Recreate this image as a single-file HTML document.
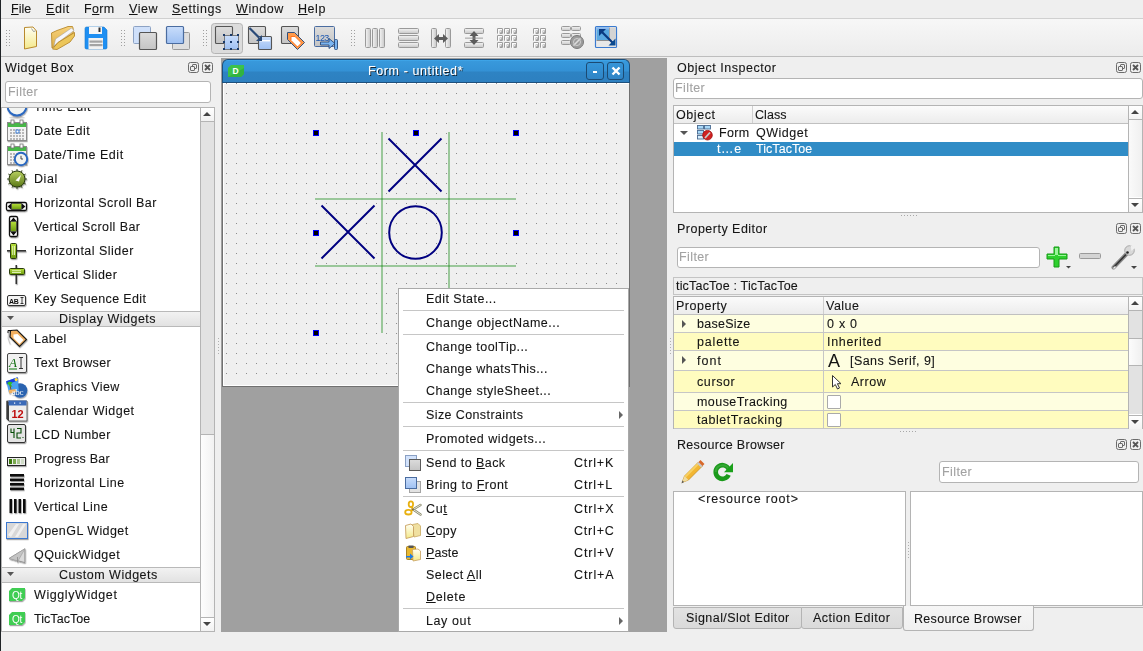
<!DOCTYPE html><html><head><meta charset="utf-8"><style>
*{box-sizing:border-box}
html,body{margin:0;padding:0}
body{width:1143px;height:651px;overflow:hidden;position:relative;background:#efefef;font-family:"Liberation Sans",sans-serif;font-size:12.5px;letter-spacing:0.4px;color:#141414;-webkit-text-stroke:0.1px currentColor}
.a{position:absolute}
.t{position:absolute;white-space:nowrap;line-height:14px;will-change:transform}
.u{text-decoration:underline;text-underline-offset:1px;text-decoration-thickness:1px}
.db{position:absolute;width:11px;height:11px;border:1px solid #6c6c6c;border-radius:2px}
.filter{position:absolute;background:#fff;border:1px solid #b4b4b4;border-radius:3px}
.ph{position:absolute;color:#a2a2a2;white-space:nowrap;line-height:14px;will-change:transform}
.frame{position:absolute;background:#fff;border:1px solid #b8b8b8}
.clip{position:absolute;overflow:hidden}
svg{position:absolute;overflow:visible}
</style></head><body>
<div class="a" style="left:0px;top:0px;width:1px;height:651px;background:#1f2326"></div>
<div class="a" style="left:1px;top:18px;width:1142px;height:1px;background:#d0d0d0"></div>
<div class="t" style="left:11px;top:2px;letter-spacing:-0.026px;"><span class="u">F</span>ile</div>
<div class="t" style="left:46px;top:2px;letter-spacing:0.562px;"><span class="u">E</span>dit</div>
<div class="t" style="left:84px;top:2px;letter-spacing:0.365px;">F<span class="u">o</span>rm</div>
<div class="t" style="left:129px;top:2px;letter-spacing:0.526px;"><span class="u">V</span>iew</div>
<div class="t" style="left:172px;top:2px;letter-spacing:0.58px;"><span class="u">S</span>ettings</div>
<div class="t" style="left:236px;top:2px;letter-spacing:0.569px;"><span class="u">W</span>indow</div>
<div class="t" style="left:298px;top:2px;letter-spacing:0.552px;"><span class="u">H</span>elp</div>
<div class="a" style="left:1px;top:19px;width:1142px;height:37px;background:linear-gradient(#f7f7f7,#ececec)"></div>
<div class="a" style="left:1px;top:56px;width:1142px;height:1px;background:#bdbdbd"></div>
<div class="a" style="left:221px;top:58px;width:446px;height:574px;background:#a0a0a0"></div>
<svg width="0" height="0" style="position:absolute"><defs>
<linearGradient id="gGrey" x1="0" y1="0" x2="0" y2="1"><stop offset="0" stop-color="#dcdcdc"/><stop offset="1" stop-color="#c4c4c4"/></linearGradient>
<linearGradient id="gBlue" x1="0" y1="0" x2="0" y2="1"><stop offset="0" stop-color="#c9ddfb"/><stop offset="1" stop-color="#9ec0f2"/></linearGradient>
<linearGradient id="gBar" x1="0" y1="0" x2="1" y2="0"><stop offset="0" stop-color="#f4f4f4"/><stop offset="1" stop-color="#c8c8c8"/></linearGradient>
<linearGradient id="gBarH" x1="0" y1="0" x2="0" y2="1"><stop offset="0" stop-color="#f4f4f4"/><stop offset="1" stop-color="#c8c8c8"/></linearGradient>
<linearGradient id="gDoc" x1="0" y1="0" x2="0" y2="1"><stop offset="0" stop-color="#fffff4"/><stop offset="1" stop-color="#f4e98a"/></linearGradient>
<linearGradient id="gFold" x1="0" y1="0" x2="0" y2="1"><stop offset="0" stop-color="#f8d27a"/><stop offset="1" stop-color="#dcae4a"/></linearGradient>
<filter id="fSh" x="-30%" y="-30%" width="160%" height="160%"><feDropShadow dx="0.6" dy="1.2" stdDeviation="0.7" flood-color="#000" flood-opacity="0.35"/></filter>
<linearGradient id="gDial" x1="0" y1="0" x2="0" y2="1"><stop offset="0" stop-color="#b8d060"/><stop offset="1" stop-color="#5a7818"/></linearGradient>
<linearGradient id="gGreen" x1="0" y1="0" x2="0" y2="1"><stop offset="0" stop-color="#b6e03a"/><stop offset="1" stop-color="#6c9a10"/></linearGradient>
</defs></svg>
<div class="a" style="left:6px;top:30px;width:1px;height:1px;background:#a0a0a0"></div>
<div class="a" style="left:9px;top:30px;width:1px;height:1px;background:#a0a0a0"></div>
<div class="a" style="left:6px;top:33px;width:1px;height:1px;background:#a0a0a0"></div>
<div class="a" style="left:9px;top:33px;width:1px;height:1px;background:#a0a0a0"></div>
<div class="a" style="left:6px;top:36px;width:1px;height:1px;background:#a0a0a0"></div>
<div class="a" style="left:9px;top:36px;width:1px;height:1px;background:#a0a0a0"></div>
<div class="a" style="left:6px;top:39px;width:1px;height:1px;background:#a0a0a0"></div>
<div class="a" style="left:9px;top:39px;width:1px;height:1px;background:#a0a0a0"></div>
<div class="a" style="left:6px;top:42px;width:1px;height:1px;background:#a0a0a0"></div>
<div class="a" style="left:9px;top:42px;width:1px;height:1px;background:#a0a0a0"></div>
<div class="a" style="left:6px;top:45px;width:1px;height:1px;background:#a0a0a0"></div>
<div class="a" style="left:9px;top:45px;width:1px;height:1px;background:#a0a0a0"></div>
<div class="a" style="left:121px;top:30px;width:1px;height:1px;background:#a0a0a0"></div>
<div class="a" style="left:124px;top:30px;width:1px;height:1px;background:#a0a0a0"></div>
<div class="a" style="left:121px;top:33px;width:1px;height:1px;background:#a0a0a0"></div>
<div class="a" style="left:124px;top:33px;width:1px;height:1px;background:#a0a0a0"></div>
<div class="a" style="left:121px;top:36px;width:1px;height:1px;background:#a0a0a0"></div>
<div class="a" style="left:124px;top:36px;width:1px;height:1px;background:#a0a0a0"></div>
<div class="a" style="left:121px;top:39px;width:1px;height:1px;background:#a0a0a0"></div>
<div class="a" style="left:124px;top:39px;width:1px;height:1px;background:#a0a0a0"></div>
<div class="a" style="left:121px;top:42px;width:1px;height:1px;background:#a0a0a0"></div>
<div class="a" style="left:124px;top:42px;width:1px;height:1px;background:#a0a0a0"></div>
<div class="a" style="left:121px;top:45px;width:1px;height:1px;background:#a0a0a0"></div>
<div class="a" style="left:124px;top:45px;width:1px;height:1px;background:#a0a0a0"></div>
<div class="a" style="left:203px;top:30px;width:1px;height:1px;background:#a0a0a0"></div>
<div class="a" style="left:206px;top:30px;width:1px;height:1px;background:#a0a0a0"></div>
<div class="a" style="left:203px;top:33px;width:1px;height:1px;background:#a0a0a0"></div>
<div class="a" style="left:206px;top:33px;width:1px;height:1px;background:#a0a0a0"></div>
<div class="a" style="left:203px;top:36px;width:1px;height:1px;background:#a0a0a0"></div>
<div class="a" style="left:206px;top:36px;width:1px;height:1px;background:#a0a0a0"></div>
<div class="a" style="left:203px;top:39px;width:1px;height:1px;background:#a0a0a0"></div>
<div class="a" style="left:206px;top:39px;width:1px;height:1px;background:#a0a0a0"></div>
<div class="a" style="left:203px;top:42px;width:1px;height:1px;background:#a0a0a0"></div>
<div class="a" style="left:206px;top:42px;width:1px;height:1px;background:#a0a0a0"></div>
<div class="a" style="left:203px;top:45px;width:1px;height:1px;background:#a0a0a0"></div>
<div class="a" style="left:206px;top:45px;width:1px;height:1px;background:#a0a0a0"></div>
<div class="a" style="left:351px;top:30px;width:1px;height:1px;background:#a0a0a0"></div>
<div class="a" style="left:354px;top:30px;width:1px;height:1px;background:#a0a0a0"></div>
<div class="a" style="left:351px;top:33px;width:1px;height:1px;background:#a0a0a0"></div>
<div class="a" style="left:354px;top:33px;width:1px;height:1px;background:#a0a0a0"></div>
<div class="a" style="left:351px;top:36px;width:1px;height:1px;background:#a0a0a0"></div>
<div class="a" style="left:354px;top:36px;width:1px;height:1px;background:#a0a0a0"></div>
<div class="a" style="left:351px;top:39px;width:1px;height:1px;background:#a0a0a0"></div>
<div class="a" style="left:354px;top:39px;width:1px;height:1px;background:#a0a0a0"></div>
<div class="a" style="left:351px;top:42px;width:1px;height:1px;background:#a0a0a0"></div>
<div class="a" style="left:354px;top:42px;width:1px;height:1px;background:#a0a0a0"></div>
<div class="a" style="left:351px;top:45px;width:1px;height:1px;background:#a0a0a0"></div>
<div class="a" style="left:354px;top:45px;width:1px;height:1px;background:#a0a0a0"></div>
<svg style="left:0;top:0" width="1143" height="60"><path d="M24.5 27.5L33 27L36.5 31V46.5L24.5 49Z" fill="url(#gDoc)" stroke="#b8892c" stroke-width="1"/><path d="M31.5 28.5L33.5 31.5L35.5 31" fill="none" stroke="#888" stroke-width="0.8"/><path d="M51.5 33L57 30.5L66 27.3L68 26.5L72.5 26.5L73.2 28.5V33L52 48Z" fill="url(#gFold)" stroke="#b8892c" stroke-width="0.9"/><path d="M54 46L55.5 39L71.5 28L74 30.5L58 42.5Z" fill="#f6f6fa" stroke="#9a9a9a" stroke-width="0.5"/><path d="M52.5 49L58 42.5L74.5 32.5V36L70 42L57 49.5Z" fill="#ecc65a" stroke="#b8892c" stroke-width="0.9"/><path d="M85 28.5Q85 27 86.5 27H104L107 30V47.5Q107 49 105.5 49H86.5Q85 49 85 47.5Z" fill="#1e8ff2" stroke="#1a78cc" stroke-width="0.6"/><rect x="89" y="27" width="13" height="7" fill="#f6f6f6"/><rect x="98.5" y="27.5" width="2" height="4.5" fill="#333"/><rect x="88.5" y="38" width="14.5" height="11" fill="#f2f2f2"/><rect x="89.5" y="40.5" width="13" height="2.2" fill="#a4a4a4"/><rect x="89.5" y="44" width="13" height="2.2" fill="#a4a4a4"/><rect x="133.5" y="26.5" width="17" height="17" rx="1" fill="#cfe0fa" stroke="#8ca2c4"/><rect x="139.5" y="32.5" width="17" height="17" rx="1" fill="url(#gGrey)" stroke="#555" stroke-width="1.2"/><rect x="172.5" y="32.5" width="17" height="17" rx="1" fill="#dedede" stroke="#9a9a9a"/><rect x="166.5" y="26.5" width="17" height="17" rx="1" fill="url(#gBlue)" stroke="#4a6ca0" stroke-width="1.2"/><rect x="211.5" y="23.5" width="31" height="30" rx="3" fill="#dcdcdc" stroke="#b4b4b4"/><rect x="215.5" y="26.5" width="17" height="17" rx="1" fill="url(#gGrey)" stroke="#555" stroke-width="1.1"/><rect x="224.5" y="35.5" width="14" height="14" fill="url(#gBlue)" stroke="#666" stroke-width="0.8"/><rect x="223" y="34" width="2" height="2" fill="#1a3a6a"/><rect x="230" y="34" width="2" height="2" fill="#1a3a6a"/><rect x="237" y="34" width="2" height="2" fill="#1a3a6a"/><rect x="223" y="41" width="2" height="2" fill="#1a3a6a"/><rect x="237" y="41" width="2" height="2" fill="#1a3a6a"/><rect x="223" y="48" width="2" height="2" fill="#1a3a6a"/><rect x="230" y="48" width="2" height="2" fill="#1a3a6a"/><rect x="237" y="48" width="2" height="2" fill="#1a3a6a"/><rect x="230" y="41" width="2" height="2" fill="#1a3a6a"/><rect x="248.5" y="26.5" width="17" height="17" rx="1" fill="url(#gGrey)" stroke="#555" stroke-width="1.1"/><rect x="258.5" y="36.5" width="13" height="13" rx="1" fill="url(#gBlue)" stroke="#555" stroke-width="1.1"/><rect x="260" y="40" width="10" height="1.4" fill="#fff"/><path d="M249.5 28L259 37.5" stroke="#2a4a78" stroke-width="2.2"/><path d="M262 35V41H256Z" fill="#2a4a78"/><rect x="281.5" y="26.5" width="17" height="17" rx="1" fill="url(#gGrey)" stroke="#555" stroke-width="1.1"/><path d="M287.5 32.5H294.5L304.5 42.5L297.5 49.5L287.5 39.5Z" fill="#ff9a4a" stroke="#34507a" stroke-width="1"/><path d="M291 36.5L295 36.5L301.5 43L297.5 47L291 40.5Z" fill="#fff" stroke="#ff6a10" stroke-width="0.9"/><rect x="314.5" y="26.5" width="20" height="20" rx="1" fill="url(#gGrey)" stroke="#4a6ca0" stroke-width="1"/><text x="315.5" y="41" font-family="Liberation Sans" font-size="9" fill="#1a56b0" letter-spacing="-0.6">123</text><path d="M320.5 42H329V38.5L335 43.5L329 48.5V45H320.5Z" fill="#7ab4f0" stroke="#2a4a78" stroke-width="0.9"/><rect x="334.5" y="39.5" width="3" height="10" rx="1" fill="#7ab4f0" stroke="#2a4a78" stroke-width="0.9"/><rect x="365.5" y="28.5" width="5" height="19" rx="1" fill="url(#gBar)" stroke="#9a9a9a"/><rect x="372.5" y="28.5" width="5" height="19" rx="1" fill="url(#gBar)" stroke="#9a9a9a"/><rect x="379.5" y="28.5" width="5" height="19" rx="1" fill="url(#gBar)" stroke="#9a9a9a"/><rect x="398.5" y="28.5" width="20" height="5" rx="1" fill="url(#gBarH)" stroke="#9a9a9a"/><rect x="398.5" y="35.5" width="20" height="5" rx="1" fill="url(#gBarH)" stroke="#9a9a9a"/><rect x="398.5" y="42.5" width="20" height="5" rx="1" fill="url(#gBarH)" stroke="#9a9a9a"/><rect x="431.5" y="28.5" width="5" height="19" rx="1" fill="url(#gBar)" stroke="#9a9a9a"/><rect x="445.5" y="28.5" width="5" height="19" rx="1" fill="url(#gBar)" stroke="#9a9a9a"/><path d="M434 38.5L439 34V37H443V34L448 38.5L443 43V40H439V43Z" fill="#5c5c5c"/><rect x="464.5" y="28.5" width="19" height="5" rx="1" fill="url(#gBarH)" stroke="#9a9a9a"/><rect x="464.5" y="42.5" width="19" height="5" rx="1" fill="url(#gBarH)" stroke="#9a9a9a"/><path d="M474 31L478.5 36H475.5V40H478.5L474 45L469.5 40H472.5V36H469.5Z" fill="#5c5c5c"/><rect x="465" y="37.7" width="18" height="0.8" fill="#888"/><rect x="497" y="28" width="6" height="6" rx="1.2" fill="#9c9c9c"/><path d="M498 29h4v1.6h-2.4v3.4h-1.6z" fill="#fcfcfc"/><rect x="500" y="31" width="1.4" height="1.4" fill="#e8e8e8"/><rect x="497" y="35" width="6" height="6" rx="1.2" fill="#9c9c9c"/><path d="M498 36h4v1.6h-2.4v3.4h-1.6z" fill="#fcfcfc"/><rect x="500" y="38" width="1.4" height="1.4" fill="#e8e8e8"/><rect x="497" y="42" width="6" height="6" rx="1.2" fill="#9c9c9c"/><path d="M498 43h4v1.6h-2.4v3.4h-1.6z" fill="#fcfcfc"/><rect x="500" y="45" width="1.4" height="1.4" fill="#e8e8e8"/><rect x="504" y="28" width="6" height="6" rx="1.2" fill="#9c9c9c"/><path d="M505 29h4v1.6h-2.4v3.4h-1.6z" fill="#fcfcfc"/><rect x="507" y="31" width="1.4" height="1.4" fill="#e8e8e8"/><rect x="504" y="35" width="6" height="6" rx="1.2" fill="#9c9c9c"/><path d="M505 36h4v1.6h-2.4v3.4h-1.6z" fill="#fcfcfc"/><rect x="507" y="38" width="1.4" height="1.4" fill="#e8e8e8"/><rect x="504" y="42" width="6" height="6" rx="1.2" fill="#9c9c9c"/><path d="M505 43h4v1.6h-2.4v3.4h-1.6z" fill="#fcfcfc"/><rect x="507" y="45" width="1.4" height="1.4" fill="#e8e8e8"/><rect x="511" y="28" width="6" height="6" rx="1.2" fill="#9c9c9c"/><path d="M512 29h4v1.6h-2.4v3.4h-1.6z" fill="#fcfcfc"/><rect x="514" y="31" width="1.4" height="1.4" fill="#e8e8e8"/><rect x="511" y="35" width="6" height="6" rx="1.2" fill="#9c9c9c"/><path d="M512 36h4v1.6h-2.4v3.4h-1.6z" fill="#fcfcfc"/><rect x="514" y="38" width="1.4" height="1.4" fill="#e8e8e8"/><rect x="511" y="42" width="6" height="6" rx="1.2" fill="#9c9c9c"/><path d="M512 43h4v1.6h-2.4v3.4h-1.6z" fill="#fcfcfc"/><rect x="514" y="45" width="1.4" height="1.4" fill="#e8e8e8"/><rect x="533" y="28" width="6" height="6" rx="1.2" fill="#9c9c9c"/><path d="M534 29h4v1.6h-2.4v3.4h-1.6z" fill="#fcfcfc"/><rect x="536" y="31" width="1.4" height="1.4" fill="#e8e8e8"/><rect x="533" y="35" width="6" height="6" rx="1.2" fill="#9c9c9c"/><path d="M534 36h4v1.6h-2.4v3.4h-1.6z" fill="#fcfcfc"/><rect x="536" y="38" width="1.4" height="1.4" fill="#e8e8e8"/><rect x="533" y="42" width="6" height="6" rx="1.2" fill="#9c9c9c"/><path d="M534 43h4v1.6h-2.4v3.4h-1.6z" fill="#fcfcfc"/><rect x="536" y="45" width="1.4" height="1.4" fill="#e8e8e8"/><rect x="540" y="28" width="6" height="6" rx="1.2" fill="#9c9c9c"/><path d="M541 29h4v1.6h-2.4v3.4h-1.6z" fill="#fcfcfc"/><rect x="543" y="31" width="1.4" height="1.4" fill="#e8e8e8"/><rect x="540" y="35" width="6" height="6" rx="1.2" fill="#9c9c9c"/><path d="M541 36h4v1.6h-2.4v3.4h-1.6z" fill="#fcfcfc"/><rect x="543" y="38" width="1.4" height="1.4" fill="#e8e8e8"/><rect x="540" y="42" width="6" height="6" rx="1.2" fill="#9c9c9c"/><path d="M541 43h4v1.6h-2.4v3.4h-1.6z" fill="#fcfcfc"/><rect x="543" y="45" width="1.4" height="1.4" fill="#e8e8e8"/><rect x="561.5" y="26.5" width="9" height="4" rx="1" fill="url(#gBarH)" stroke="#9a9a9a"/><rect x="571.5" y="26.5" width="9" height="4" rx="1" fill="url(#gBarH)" stroke="#9a9a9a"/><rect x="561.5" y="33.5" width="9" height="4" rx="1" fill="url(#gBarH)" stroke="#9a9a9a"/><rect x="571.5" y="33.5" width="9" height="4" rx="1" fill="url(#gBarH)" stroke="#9a9a9a"/><rect x="561.5" y="40.5" width="9" height="4" rx="1" fill="url(#gBarH)" stroke="#9a9a9a"/><rect x="571.5" y="40.5" width="9" height="4" rx="1" fill="url(#gBarH)" stroke="#9a9a9a"/><circle cx="577" cy="42" r="6.5" fill="#9c9c9c" stroke="#7a7a7a"/><path d="M573.5 45.5L580.5 38.5" stroke="#ddd" stroke-width="1.6"/><circle cx="577" cy="42" r="3.5" fill="none" stroke="#cfcfcf" stroke-width="1"/><rect x="595.5" y="26.5" width="21" height="21" rx="1" fill="#e6e6e6" stroke="#3a7ad0" stroke-width="1.2"/><rect x="596.5" y="27.5" width="12.5" height="12.5" fill="#5aa8e0"/><rect x="596.5" y="27.5" width="12.5" height="2" fill="#8ab8f0"/><rect x="609" y="27.5" width="7" height="19" fill="#d4d4d4"/><rect x="596.5" y="40" width="19.5" height="6.5" fill="#e8e8e8"/><rect x="596.5" y="40" width="13" height="0.8" fill="#777"/><rect x="609" y="27.5" width="0.8" height="13" fill="#999"/><path d="M601 31L613 43" stroke="#0a3a80" stroke-width="2.2"/><path d="M599 29H606L599 36Z" fill="#0a3a80"/><path d="M615.5 45.5H608.5L615.5 38.5Z" fill="#0a4a90"/></svg>
<div class="t" style="left:5px;top:61px;letter-spacing:0.497px;">Widget Box</div>
<svg style="left:188px;top:62px" width="11" height="11" viewBox="0 0 11 11"><rect x="0.5" y="0.5" width="10" height="10" rx="2" fill="none" stroke="#6c6c6c"/><rect x="4.5" y="2.5" width="4" height="4" rx="0.5" fill="none" stroke="#6c6c6c"/><rect x="2.5" y="4.5" width="4" height="4" rx="0.5" fill="#efefef" stroke="#6c6c6c"/></svg>
<svg style="left:202px;top:62px" width="11" height="11" viewBox="0 0 11 11"><rect x="0.5" y="0.5" width="10" height="10" rx="2" fill="none" stroke="#6c6c6c"/><path d="M3 3L8 8M8 3L3 8" stroke="#555" stroke-width="1.8"/></svg>
<div class="filter" style="left:5px;top:81px;width:206px;height:22px"></div>
<div class="ph" style="left:8px;top:85px">Filter</div>
<div class="a" style="left:1px;top:107px;width:214px;height:525px;background:#fff;border:1px solid #b4b4b4"></div>
<div class="clip" style="left:2px;top:108px;width:198px;height:523px">
<div class="t" style="left:32px;top:-8px;letter-spacing:0.51px">Time Edit</div>
<div class="t" style="left:32px;top:16px;letter-spacing:0.539px">Date Edit</div>
<div class="t" style="left:32px;top:40px;letter-spacing:0.534px">Date/Time Edit</div>
<div class="t" style="left:32px;top:64px;letter-spacing:0.568px">Dial</div>
<div class="t" style="left:32px;top:88px;letter-spacing:0.42px">Horizontal Scroll Bar</div>
<div class="t" style="left:32px;top:112px;letter-spacing:0.405px">Vertical Scroll Bar</div>
<div class="t" style="left:32px;top:136px;letter-spacing:0.476px">Horizontal Slider</div>
<div class="t" style="left:32px;top:160px;letter-spacing:0.465px">Vertical Slider</div>
<div class="t" style="left:32px;top:184px;letter-spacing:0.346px">Key Sequence Edit</div>
<div class="t" style="left:32px;top:224px;letter-spacing:0.449px">Label</div>
<div class="t" style="left:32px;top:248px;letter-spacing:0.411px">Text Browser</div>
<div class="t" style="left:32px;top:272px;letter-spacing:0.409px">Graphics View</div>
<div class="t" style="left:32px;top:296px;letter-spacing:0.497px">Calendar Widget</div>
<div class="t" style="left:32px;top:320px;letter-spacing:0.378px">LCD Number</div>
<div class="t" style="left:32px;top:344px;letter-spacing:0.24px">Progress Bar</div>
<div class="t" style="left:32px;top:368px;letter-spacing:0.48px">Horizontal Line</div>
<div class="t" style="left:32px;top:392px;letter-spacing:0.469px">Vertical Line</div>
<div class="t" style="left:32px;top:416px;letter-spacing:0.415px">OpenGL Widget</div>
<div class="t" style="left:32px;top:440px;letter-spacing:0.462px">QQuickWidget</div>
<div class="t" style="left:32px;top:480px;letter-spacing:0.587px">WigglyWidget</div>
<div class="t" style="left:32px;top:504px;letter-spacing:0.049px">TicTacToe</div>
<div class="a" style="left:0px;top:203px;width:198px;height:16px;background:linear-gradient(#f2f2f2,#e2e2e2);border-top:1px solid #b9b9b9;border-bottom:1px solid #b9b9b9"></div>
<div class="t" style="left:57px;top:204px;letter-spacing:0.496px">Display Widgets</div>
<svg style="left:5px;top:208px" width="8" height="5"><path d="M0 0H7L3.5 4Z" fill="#555"/></svg>
<div class="a" style="left:0px;top:459px;width:198px;height:16px;background:linear-gradient(#f2f2f2,#e2e2e2);border-top:1px solid #b9b9b9;border-bottom:1px solid #b9b9b9"></div>
<div class="t" style="left:57px;top:460px;letter-spacing:0.508px">Custom Widgets</div>
<svg style="left:5px;top:464px" width="8" height="5"><path d="M0 0H7L3.5 4Z" fill="#555"/></svg>
<svg style="left:0;top:0" width="198" height="523"><g transform="translate(-2,-108)" filter="url(#fSh)"><ellipse cx="17" cy="117.5" rx="8" ry="1.2" fill="#000" opacity="0.15"/><circle cx="17" cy="106" r="9.5" fill="#f2f4f2" stroke="#2a68c0" stroke-width="2"/><path d="M17 99.5V106H19" stroke="#333" stroke-width="0.9" fill="none"/><rect x="7.5" y="122.5" width="19" height="18" fill="#f4f4f4" stroke="#8a8a8a"/><rect x="8" y="123" width="18" height="4" fill="#47b847"/><rect x="11" y="120" width="3" height="4" fill="#fff" stroke="#777" stroke-width="0.8"/><rect x="20" y="120" width="3" height="4" fill="#fff" stroke="#777" stroke-width="0.8"/><rect x="10" y="129" width="2" height="2" fill="#b8b8b8"/><rect x="13" y="129" width="2" height="2" fill="#b8b8b8"/><rect x="16" y="129" width="2" height="2" fill="#b8b8b8"/><rect x="19" y="129" width="2" height="2" fill="#b8b8b8"/><rect x="22" y="129" width="2" height="2" fill="#b8b8b8"/><rect x="10" y="132" width="2" height="2" fill="#b8b8b8"/><rect x="13" y="132" width="2" height="2" fill="#b8b8b8"/><rect x="16" y="132" width="2" height="2" fill="#b8b8b8"/><rect x="19" y="132" width="2" height="2" fill="#b8b8b8"/><rect x="22" y="132" width="2" height="2" fill="#b8b8b8"/><rect x="10" y="135" width="2" height="2" fill="#b8b8b8"/><rect x="13" y="135" width="2" height="2" fill="#b8b8b8"/><rect x="16" y="135" width="2" height="2" fill="#b8b8b8"/><rect x="19" y="135" width="2" height="2" fill="#b8b8b8"/><rect x="22" y="135" width="2" height="2" fill="#b8b8b8"/><rect x="10" y="138" width="2" height="2" fill="#b8b8b8"/><rect x="13" y="138" width="2" height="2" fill="#b8b8b8"/><rect x="16" y="138" width="2" height="2" fill="#b8b8b8"/><rect x="19" y="138" width="2" height="2" fill="#b8b8b8"/><rect x="22" y="138" width="2" height="2" fill="#b8b8b8"/><rect x="16" y="130" width="3" height="3" fill="#fff" stroke="#3a7ad0" stroke-width="1"/><rect x="7.5" y="146.5" width="19" height="18" fill="#f4f4f4" stroke="#8a8a8a"/><rect x="8" y="147" width="18" height="4" fill="#47b847"/><rect x="11" y="144" width="3" height="4" fill="#fff" stroke="#777" stroke-width="0.8"/><rect x="20" y="144" width="3" height="4" fill="#fff" stroke="#777" stroke-width="0.8"/><rect x="10" y="153" width="2" height="2" fill="#b8b8b8"/><rect x="13" y="153" width="2" height="2" fill="#b8b8b8"/><rect x="16" y="153" width="2" height="2" fill="#b8b8b8"/><rect x="19" y="153" width="2" height="2" fill="#b8b8b8"/><rect x="22" y="153" width="2" height="2" fill="#b8b8b8"/><rect x="10" y="156" width="2" height="2" fill="#b8b8b8"/><rect x="13" y="156" width="2" height="2" fill="#b8b8b8"/><rect x="16" y="156" width="2" height="2" fill="#b8b8b8"/><rect x="19" y="156" width="2" height="2" fill="#b8b8b8"/><rect x="22" y="156" width="2" height="2" fill="#b8b8b8"/><rect x="10" y="159" width="2" height="2" fill="#b8b8b8"/><rect x="13" y="159" width="2" height="2" fill="#b8b8b8"/><rect x="16" y="159" width="2" height="2" fill="#b8b8b8"/><rect x="19" y="159" width="2" height="2" fill="#b8b8b8"/><rect x="22" y="159" width="2" height="2" fill="#b8b8b8"/><rect x="10" y="162" width="2" height="2" fill="#b8b8b8"/><rect x="13" y="162" width="2" height="2" fill="#b8b8b8"/><rect x="16" y="162" width="2" height="2" fill="#b8b8b8"/><rect x="19" y="162" width="2" height="2" fill="#b8b8b8"/><rect x="22" y="162" width="2" height="2" fill="#b8b8b8"/><circle cx="21" cy="159" r="6.2" fill="#f2f4f2" stroke="#2a68c0" stroke-width="2"/><path d="M21 155.8V159H23" stroke="#333" stroke-width="0.9" fill="none"/><path d="M25.0 179.0L27.0 179.0" stroke="#3a4a20" stroke-width="1"/><path d="M23.9 183.0L25.7 184.0" stroke="#3a4a20" stroke-width="1"/><path d="M21.0 185.9L22.0 187.7" stroke="#3a4a20" stroke-width="1"/><path d="M17.0 187.0L17.0 189.0" stroke="#3a4a20" stroke-width="1"/><path d="M13.0 185.9L12.0 187.7" stroke="#3a4a20" stroke-width="1"/><path d="M10.1 183.0L8.3 184.0" stroke="#3a4a20" stroke-width="1"/><path d="M9.0 179.0L7.0 179.0" stroke="#3a4a20" stroke-width="1"/><path d="M10.1 175.0L8.3 174.0" stroke="#3a4a20" stroke-width="1"/><path d="M13.0 172.1L12.0 170.3" stroke="#3a4a20" stroke-width="1"/><path d="M17.0 171.0L17.0 169.0" stroke="#3a4a20" stroke-width="1"/><path d="M21.0 172.1L22.0 170.3" stroke="#3a4a20" stroke-width="1"/><path d="M23.9 175.0L25.7 174.0" stroke="#3a4a20" stroke-width="1"/><circle cx="17" cy="179" r="8" fill="url(#gDial)" stroke="#2a3a10" stroke-width="1"/><path d="M15.5 180.5L21 175L19 181.5Z" fill="#fff"/><path d="M15.5 180.5L21 175L17.5 179Z" fill="#dfe8c8"/><rect x="6.5" y="202.5" width="20" height="8" rx="1.5" fill="#fff" stroke="#111" stroke-width="1.3"/><rect x="11.5" y="203.5" width="10" height="6" fill="url(#gGreen)" stroke="#222" stroke-width="0.7"/><path d="M7.6 206.5L11 203.6V209.4Z M25.4 206.5L22 203.6V209.4Z" fill="#111"/><rect x="9.5" y="216.5" width="8" height="20" rx="1.5" fill="#fff" stroke="#111" stroke-width="1.3"/><rect x="10.5" y="221.5" width="6" height="10" fill="url(#gGreen)" stroke="#222" stroke-width="0.7"/><path d="M13.5 217.6L10.6 221H16.4Z M13.5 235.4L10.6 232H16.4Z" fill="#111"/><rect x="7" y="250" width="19" height="1.6" fill="#333"/><rect x="10.5" y="243.5" width="6" height="15" rx="1" fill="url(#gGreen)" stroke="#2a3a10"/><rect x="12.3" y="246" width="0.9" height="9" fill="#e8f8c0"/><rect x="14" y="246" width="0.9" height="9" fill="#e8f8c0"/><rect x="15.5" y="265" width="1.6" height="19" fill="#333"/><rect x="9.5" y="268.5" width="15" height="6" rx="1" fill="url(#gGreen)" stroke="#2a3a10"/><rect x="12" y="270.3" width="9" height="0.9" fill="#e8f8c0"/><rect x="12" y="272" width="9" height="0.9" fill="#e8f8c0"/><rect x="7.5" y="295.5" width="18" height="10" rx="1.5" fill="#f4f4f4" stroke="#333"/><text x="9" y="303.5" font-family="Liberation Sans" font-weight="bold" font-size="7" fill="#111" letter-spacing="-0.4">AB</text><path d="M20.5 297.5H23.5M22 297.5V303.5M20.5 303.5H23.5" stroke="#111" stroke-width="0.8"/><path d="M10.5 330.5L17 330L26.5 339.5L19.5 346.5L10 337Z" fill="#f2b060" stroke="#1a1a1a" stroke-width="1.2"/><path d="M13.5 334.5L17.5 334L23.5 340L19.5 344L13.5 338Z" fill="#fff"/><path d="M8 333V330.5H12" fill="none" stroke="#111" stroke-width="1"/><path d="M8.5 333Q7 338 10 344" fill="none" stroke="#aaa" stroke-width="0.6"/><rect x="7.5" y="353.5" width="19" height="19" rx="1.5" fill="#f0f0f0" stroke="#444"/><text x="9" y="367" font-family="Liberation Serif" font-style="italic" font-size="13" fill="#0a6a0a">A</text><rect x="9" y="368.5" width="8" height="1" fill="#0a7a0a"/><path d="M19 357.5H23M21 357.5V368.5M19 368.5H23" stroke="#222" stroke-width="0.9"/><circle cx="20" cy="390.5" r="7.3" fill="#2a64b0"/><path d="M6.2 381.2L17.6 377.2L18.8 390.8L9.2 393.6Z" fill="#4aa0f0"/><path d="M6.2 381.2L17.6 377.2L17.9 380.5L6.8 384.5Z" fill="#1a40e0"/><path d="M7 383L9.5 381.5L12.5 382.5L11 384.5L12.5 387L10 386Z" fill="#30c020"/><path d="M10 385.5L11.5 392" stroke="#7a5020" stroke-width="1"/><path d="M8.6 390L15.5 389L16 392L9.2 393.6Z" fill="#f0b060"/><circle cx="16.2" cy="379.6" r="1.6" fill="#ffe040"/><text x="11.5" y="394.5" font-family="Liberation Serif" font-size="9" fill="#fff" letter-spacing="-0.2">abc</text><path d="M7 401H27V421H9L7 419Z" fill="#eeeeee" stroke="#555" stroke-width="0.9"/><path d="M6.5 400.5L9 402V421L6.5 419Z" fill="#3a3a3a"/><rect x="8.5" y="400.5" width="18" height="5" fill="#3a6ab8"/><rect x="14" y="402.5" width="1.2" height="1.2" fill="#fff"/><rect x="19.5" y="402.5" width="1.2" height="1.2" fill="#fff"/><text x="17.5" y="417.5" font-family="Liberation Sans" font-weight="bold" font-size="11" fill="#c01010" text-anchor="middle" letter-spacing="-0.2">12</text><rect x="7.5" y="424.5" width="18" height="18" rx="1.5" fill="#e4e4e4" stroke="#333"/><path d="M11 428.5V432.5H14M14 428.5V438M17 428.5H21V433H17V438H21M22.5 437.5h1" fill="none" stroke="#044a04" stroke-width="1.1"/><rect x="7.5" y="457.5" width="18" height="8" fill="#eee" stroke="#222"/><rect x="9" y="459" width="3" height="5" fill="#3a7a10"/><rect x="13" y="459" width="3" height="5" fill="#7aaa50"/><rect x="17" y="459" width="3" height="5" fill="#aac890"/><rect x="21" y="459" width="3" height="5" fill="#d0dcc8"/><rect x="10" y="474" width="14" height="2.6" fill="#111"/><rect x="10" y="478.5" width="14" height="2.6" fill="#111"/><rect x="10" y="483" width="14" height="2.6" fill="#111"/><rect x="10" y="487.5" width="14" height="2.6" fill="#111"/><rect x="9.5" y="499" width="2.6" height="14" fill="#111"/><rect x="14" y="499" width="2.6" height="14" fill="#111"/><rect x="18.5" y="499" width="2.6" height="14" fill="#111"/><rect x="23" y="499" width="2.6" height="14" fill="#111"/><rect x="6.5" y="522.5" width="21" height="16" fill="#d8d8d8" stroke="#3a78d0"/><path d="M8 535L16 524H19L11 537Z M15 537L23 524H26L18 537Z" fill="#f0f0f0"/><path d="M9.2 558.4L24.9 548.8L24.9 562.6Z" fill="#dadada" stroke="#8c8c8c" stroke-width="0.9" stroke-linejoin="round"/><path d="M9.2 558.4L24.9 548.8L18 561Z" fill="#c4c4c4" stroke="#9a9a9a" stroke-width="0.6"/><path d="M17.5 557L17.5 562.5" stroke="#8c8c8c" stroke-width="0.8"/><path d="M12 588H25V598L22 601H9V591Z" fill="#41cd52"/><text x="17" y="598.5" font-family="Liberation Sans" font-size="10" fill="#fff" text-anchor="middle" letter-spacing="-0.3">Qt</text><path d="M12 612H25V622L22 625H9V615Z" fill="#41cd52"/><text x="17" y="622.5" font-family="Liberation Sans" font-size="10" fill="#fff" text-anchor="middle" letter-spacing="-0.3">Qt</text></g></svg>
</div>
<div class="a" style="left:200px;top:108px;width:1px;height:523px;background:#b4b4b4"></div>
<div class="a" style="left:201px;top:108px;width:13px;height:13px;background:linear-gradient(#fff,#f2f2f2)"></div>
<div class="a" style="left:201px;top:121px;width:13px;height:1px;background:#b4b4b4"></div>
<div class="a" style="left:201px;top:122px;width:13px;height:313px;background:#e2e2e2"></div>
<div class="a" style="left:201px;top:434px;width:13px;height:1px;background:#b4b4b4"></div>
<div class="a" style="left:201px;top:435px;width:13px;height:182px;background:linear-gradient(90deg,#fdfdfd,#f2f2f2)"></div>
<div class="a" style="left:201px;top:617px;width:13px;height:1px;background:#b4b4b4"></div>
<div class="a" style="left:201px;top:618px;width:13px;height:13px;background:linear-gradient(#fff,#f2f2f2)"></div>
<svg style="left:203px;top:112px" width="9" height="5"><path d="M0 4H8L4 0Z" fill="#444"/></svg>
<svg style="left:203px;top:622px" width="9" height="5"><path d="M0 0H8L4 4Z" fill="#444"/></svg>
<div class="a" style="left:218px;top:338px;width:1px;height:1px;background:#b0b0b0"></div>
<div class="a" style="left:670px;top:338px;width:1px;height:1px;background:#b0b0b0"></div>
<div class="a" style="left:218px;top:341px;width:1px;height:1px;background:#b0b0b0"></div>
<div class="a" style="left:670px;top:341px;width:1px;height:1px;background:#b0b0b0"></div>
<div class="a" style="left:218px;top:344px;width:1px;height:1px;background:#b0b0b0"></div>
<div class="a" style="left:670px;top:344px;width:1px;height:1px;background:#b0b0b0"></div>
<div class="a" style="left:218px;top:347px;width:1px;height:1px;background:#b0b0b0"></div>
<div class="a" style="left:670px;top:347px;width:1px;height:1px;background:#b0b0b0"></div>
<div class="a" style="left:218px;top:350px;width:1px;height:1px;background:#b0b0b0"></div>
<div class="a" style="left:670px;top:350px;width:1px;height:1px;background:#b0b0b0"></div>
<div class="a" style="left:218px;top:353px;width:1px;height:1px;background:#b0b0b0"></div>
<div class="a" style="left:670px;top:353px;width:1px;height:1px;background:#b0b0b0"></div>
<div class="a" style="left:222px;top:83px;width:408px;height:304px;background:#707070"></div>
<div class="a" style="left:223px;top:83px;width:406px;height:303px;background:#fff"></div>
<div class="a" style="left:224px;top:84px;width:405px;height:301px;background:#efefef"></div>
<svg style="left:0;top:0" width="1143" height="651"><path fill="#8c8c8c" d="M226 83h1v1h-1zM236 83h1v1h-1zM246 83h1v1h-1zM256 83h1v1h-1zM266 83h1v1h-1zM276 83h1v1h-1zM286 83h1v1h-1zM296 83h1v1h-1zM306 83h1v1h-1zM316 83h1v1h-1zM326 83h1v1h-1zM336 83h1v1h-1zM346 83h1v1h-1zM356 83h1v1h-1zM366 83h1v1h-1zM376 83h1v1h-1zM386 83h1v1h-1zM396 83h1v1h-1zM406 83h1v1h-1zM416 83h1v1h-1zM426 83h1v1h-1zM436 83h1v1h-1zM446 83h1v1h-1zM456 83h1v1h-1zM466 83h1v1h-1zM476 83h1v1h-1zM486 83h1v1h-1zM496 83h1v1h-1zM506 83h1v1h-1zM516 83h1v1h-1zM526 83h1v1h-1zM536 83h1v1h-1zM546 83h1v1h-1zM556 83h1v1h-1zM566 83h1v1h-1zM576 83h1v1h-1zM586 83h1v1h-1zM596 83h1v1h-1zM606 83h1v1h-1zM616 83h1v1h-1zM226 93h1v1h-1zM236 93h1v1h-1zM246 93h1v1h-1zM256 93h1v1h-1zM266 93h1v1h-1zM276 93h1v1h-1zM286 93h1v1h-1zM296 93h1v1h-1zM306 93h1v1h-1zM316 93h1v1h-1zM326 93h1v1h-1zM336 93h1v1h-1zM346 93h1v1h-1zM356 93h1v1h-1zM366 93h1v1h-1zM376 93h1v1h-1zM386 93h1v1h-1zM396 93h1v1h-1zM406 93h1v1h-1zM416 93h1v1h-1zM426 93h1v1h-1zM436 93h1v1h-1zM446 93h1v1h-1zM456 93h1v1h-1zM466 93h1v1h-1zM476 93h1v1h-1zM486 93h1v1h-1zM496 93h1v1h-1zM506 93h1v1h-1zM516 93h1v1h-1zM526 93h1v1h-1zM536 93h1v1h-1zM546 93h1v1h-1zM556 93h1v1h-1zM566 93h1v1h-1zM576 93h1v1h-1zM586 93h1v1h-1zM596 93h1v1h-1zM606 93h1v1h-1zM616 93h1v1h-1zM226 103h1v1h-1zM236 103h1v1h-1zM246 103h1v1h-1zM256 103h1v1h-1zM266 103h1v1h-1zM276 103h1v1h-1zM286 103h1v1h-1zM296 103h1v1h-1zM306 103h1v1h-1zM316 103h1v1h-1zM326 103h1v1h-1zM336 103h1v1h-1zM346 103h1v1h-1zM356 103h1v1h-1zM366 103h1v1h-1zM376 103h1v1h-1zM386 103h1v1h-1zM396 103h1v1h-1zM406 103h1v1h-1zM416 103h1v1h-1zM426 103h1v1h-1zM436 103h1v1h-1zM446 103h1v1h-1zM456 103h1v1h-1zM466 103h1v1h-1zM476 103h1v1h-1zM486 103h1v1h-1zM496 103h1v1h-1zM506 103h1v1h-1zM516 103h1v1h-1zM526 103h1v1h-1zM536 103h1v1h-1zM546 103h1v1h-1zM556 103h1v1h-1zM566 103h1v1h-1zM576 103h1v1h-1zM586 103h1v1h-1zM596 103h1v1h-1zM606 103h1v1h-1zM616 103h1v1h-1zM226 113h1v1h-1zM236 113h1v1h-1zM246 113h1v1h-1zM256 113h1v1h-1zM266 113h1v1h-1zM276 113h1v1h-1zM286 113h1v1h-1zM296 113h1v1h-1zM306 113h1v1h-1zM316 113h1v1h-1zM326 113h1v1h-1zM336 113h1v1h-1zM346 113h1v1h-1zM356 113h1v1h-1zM366 113h1v1h-1zM376 113h1v1h-1zM386 113h1v1h-1zM396 113h1v1h-1zM406 113h1v1h-1zM416 113h1v1h-1zM426 113h1v1h-1zM436 113h1v1h-1zM446 113h1v1h-1zM456 113h1v1h-1zM466 113h1v1h-1zM476 113h1v1h-1zM486 113h1v1h-1zM496 113h1v1h-1zM506 113h1v1h-1zM516 113h1v1h-1zM526 113h1v1h-1zM536 113h1v1h-1zM546 113h1v1h-1zM556 113h1v1h-1zM566 113h1v1h-1zM576 113h1v1h-1zM586 113h1v1h-1zM596 113h1v1h-1zM606 113h1v1h-1zM616 113h1v1h-1zM226 123h1v1h-1zM236 123h1v1h-1zM246 123h1v1h-1zM256 123h1v1h-1zM266 123h1v1h-1zM276 123h1v1h-1zM286 123h1v1h-1zM296 123h1v1h-1zM306 123h1v1h-1zM316 123h1v1h-1zM326 123h1v1h-1zM336 123h1v1h-1zM346 123h1v1h-1zM356 123h1v1h-1zM366 123h1v1h-1zM376 123h1v1h-1zM386 123h1v1h-1zM396 123h1v1h-1zM406 123h1v1h-1zM416 123h1v1h-1zM426 123h1v1h-1zM436 123h1v1h-1zM446 123h1v1h-1zM456 123h1v1h-1zM466 123h1v1h-1zM476 123h1v1h-1zM486 123h1v1h-1zM496 123h1v1h-1zM506 123h1v1h-1zM516 123h1v1h-1zM526 123h1v1h-1zM536 123h1v1h-1zM546 123h1v1h-1zM556 123h1v1h-1zM566 123h1v1h-1zM576 123h1v1h-1zM586 123h1v1h-1zM596 123h1v1h-1zM606 123h1v1h-1zM616 123h1v1h-1zM226 133h1v1h-1zM236 133h1v1h-1zM246 133h1v1h-1zM256 133h1v1h-1zM266 133h1v1h-1zM276 133h1v1h-1zM286 133h1v1h-1zM296 133h1v1h-1zM306 133h1v1h-1zM316 133h1v1h-1zM326 133h1v1h-1zM336 133h1v1h-1zM346 133h1v1h-1zM356 133h1v1h-1zM366 133h1v1h-1zM376 133h1v1h-1zM386 133h1v1h-1zM396 133h1v1h-1zM406 133h1v1h-1zM416 133h1v1h-1zM426 133h1v1h-1zM436 133h1v1h-1zM446 133h1v1h-1zM456 133h1v1h-1zM466 133h1v1h-1zM476 133h1v1h-1zM486 133h1v1h-1zM496 133h1v1h-1zM506 133h1v1h-1zM516 133h1v1h-1zM526 133h1v1h-1zM536 133h1v1h-1zM546 133h1v1h-1zM556 133h1v1h-1zM566 133h1v1h-1zM576 133h1v1h-1zM586 133h1v1h-1zM596 133h1v1h-1zM606 133h1v1h-1zM616 133h1v1h-1zM226 143h1v1h-1zM236 143h1v1h-1zM246 143h1v1h-1zM256 143h1v1h-1zM266 143h1v1h-1zM276 143h1v1h-1zM286 143h1v1h-1zM296 143h1v1h-1zM306 143h1v1h-1zM316 143h1v1h-1zM326 143h1v1h-1zM336 143h1v1h-1zM346 143h1v1h-1zM356 143h1v1h-1zM366 143h1v1h-1zM376 143h1v1h-1zM386 143h1v1h-1zM396 143h1v1h-1zM406 143h1v1h-1zM416 143h1v1h-1zM426 143h1v1h-1zM436 143h1v1h-1zM446 143h1v1h-1zM456 143h1v1h-1zM466 143h1v1h-1zM476 143h1v1h-1zM486 143h1v1h-1zM496 143h1v1h-1zM506 143h1v1h-1zM516 143h1v1h-1zM526 143h1v1h-1zM536 143h1v1h-1zM546 143h1v1h-1zM556 143h1v1h-1zM566 143h1v1h-1zM576 143h1v1h-1zM586 143h1v1h-1zM596 143h1v1h-1zM606 143h1v1h-1zM616 143h1v1h-1zM226 153h1v1h-1zM236 153h1v1h-1zM246 153h1v1h-1zM256 153h1v1h-1zM266 153h1v1h-1zM276 153h1v1h-1zM286 153h1v1h-1zM296 153h1v1h-1zM306 153h1v1h-1zM316 153h1v1h-1zM326 153h1v1h-1zM336 153h1v1h-1zM346 153h1v1h-1zM356 153h1v1h-1zM366 153h1v1h-1zM376 153h1v1h-1zM386 153h1v1h-1zM396 153h1v1h-1zM406 153h1v1h-1zM416 153h1v1h-1zM426 153h1v1h-1zM436 153h1v1h-1zM446 153h1v1h-1zM456 153h1v1h-1zM466 153h1v1h-1zM476 153h1v1h-1zM486 153h1v1h-1zM496 153h1v1h-1zM506 153h1v1h-1zM516 153h1v1h-1zM526 153h1v1h-1zM536 153h1v1h-1zM546 153h1v1h-1zM556 153h1v1h-1zM566 153h1v1h-1zM576 153h1v1h-1zM586 153h1v1h-1zM596 153h1v1h-1zM606 153h1v1h-1zM616 153h1v1h-1zM226 163h1v1h-1zM236 163h1v1h-1zM246 163h1v1h-1zM256 163h1v1h-1zM266 163h1v1h-1zM276 163h1v1h-1zM286 163h1v1h-1zM296 163h1v1h-1zM306 163h1v1h-1zM316 163h1v1h-1zM326 163h1v1h-1zM336 163h1v1h-1zM346 163h1v1h-1zM356 163h1v1h-1zM366 163h1v1h-1zM376 163h1v1h-1zM386 163h1v1h-1zM396 163h1v1h-1zM406 163h1v1h-1zM416 163h1v1h-1zM426 163h1v1h-1zM436 163h1v1h-1zM446 163h1v1h-1zM456 163h1v1h-1zM466 163h1v1h-1zM476 163h1v1h-1zM486 163h1v1h-1zM496 163h1v1h-1zM506 163h1v1h-1zM516 163h1v1h-1zM526 163h1v1h-1zM536 163h1v1h-1zM546 163h1v1h-1zM556 163h1v1h-1zM566 163h1v1h-1zM576 163h1v1h-1zM586 163h1v1h-1zM596 163h1v1h-1zM606 163h1v1h-1zM616 163h1v1h-1zM226 173h1v1h-1zM236 173h1v1h-1zM246 173h1v1h-1zM256 173h1v1h-1zM266 173h1v1h-1zM276 173h1v1h-1zM286 173h1v1h-1zM296 173h1v1h-1zM306 173h1v1h-1zM316 173h1v1h-1zM326 173h1v1h-1zM336 173h1v1h-1zM346 173h1v1h-1zM356 173h1v1h-1zM366 173h1v1h-1zM376 173h1v1h-1zM386 173h1v1h-1zM396 173h1v1h-1zM406 173h1v1h-1zM416 173h1v1h-1zM426 173h1v1h-1zM436 173h1v1h-1zM446 173h1v1h-1zM456 173h1v1h-1zM466 173h1v1h-1zM476 173h1v1h-1zM486 173h1v1h-1zM496 173h1v1h-1zM506 173h1v1h-1zM516 173h1v1h-1zM526 173h1v1h-1zM536 173h1v1h-1zM546 173h1v1h-1zM556 173h1v1h-1zM566 173h1v1h-1zM576 173h1v1h-1zM586 173h1v1h-1zM596 173h1v1h-1zM606 173h1v1h-1zM616 173h1v1h-1zM226 183h1v1h-1zM236 183h1v1h-1zM246 183h1v1h-1zM256 183h1v1h-1zM266 183h1v1h-1zM276 183h1v1h-1zM286 183h1v1h-1zM296 183h1v1h-1zM306 183h1v1h-1zM316 183h1v1h-1zM326 183h1v1h-1zM336 183h1v1h-1zM346 183h1v1h-1zM356 183h1v1h-1zM366 183h1v1h-1zM376 183h1v1h-1zM386 183h1v1h-1zM396 183h1v1h-1zM406 183h1v1h-1zM416 183h1v1h-1zM426 183h1v1h-1zM436 183h1v1h-1zM446 183h1v1h-1zM456 183h1v1h-1zM466 183h1v1h-1zM476 183h1v1h-1zM486 183h1v1h-1zM496 183h1v1h-1zM506 183h1v1h-1zM516 183h1v1h-1zM526 183h1v1h-1zM536 183h1v1h-1zM546 183h1v1h-1zM556 183h1v1h-1zM566 183h1v1h-1zM576 183h1v1h-1zM586 183h1v1h-1zM596 183h1v1h-1zM606 183h1v1h-1zM616 183h1v1h-1zM226 193h1v1h-1zM236 193h1v1h-1zM246 193h1v1h-1zM256 193h1v1h-1zM266 193h1v1h-1zM276 193h1v1h-1zM286 193h1v1h-1zM296 193h1v1h-1zM306 193h1v1h-1zM316 193h1v1h-1zM326 193h1v1h-1zM336 193h1v1h-1zM346 193h1v1h-1zM356 193h1v1h-1zM366 193h1v1h-1zM376 193h1v1h-1zM386 193h1v1h-1zM396 193h1v1h-1zM406 193h1v1h-1zM416 193h1v1h-1zM426 193h1v1h-1zM436 193h1v1h-1zM446 193h1v1h-1zM456 193h1v1h-1zM466 193h1v1h-1zM476 193h1v1h-1zM486 193h1v1h-1zM496 193h1v1h-1zM506 193h1v1h-1zM516 193h1v1h-1zM526 193h1v1h-1zM536 193h1v1h-1zM546 193h1v1h-1zM556 193h1v1h-1zM566 193h1v1h-1zM576 193h1v1h-1zM586 193h1v1h-1zM596 193h1v1h-1zM606 193h1v1h-1zM616 193h1v1h-1zM226 203h1v1h-1zM236 203h1v1h-1zM246 203h1v1h-1zM256 203h1v1h-1zM266 203h1v1h-1zM276 203h1v1h-1zM286 203h1v1h-1zM296 203h1v1h-1zM306 203h1v1h-1zM316 203h1v1h-1zM326 203h1v1h-1zM336 203h1v1h-1zM346 203h1v1h-1zM356 203h1v1h-1zM366 203h1v1h-1zM376 203h1v1h-1zM386 203h1v1h-1zM396 203h1v1h-1zM406 203h1v1h-1zM416 203h1v1h-1zM426 203h1v1h-1zM436 203h1v1h-1zM446 203h1v1h-1zM456 203h1v1h-1zM466 203h1v1h-1zM476 203h1v1h-1zM486 203h1v1h-1zM496 203h1v1h-1zM506 203h1v1h-1zM516 203h1v1h-1zM526 203h1v1h-1zM536 203h1v1h-1zM546 203h1v1h-1zM556 203h1v1h-1zM566 203h1v1h-1zM576 203h1v1h-1zM586 203h1v1h-1zM596 203h1v1h-1zM606 203h1v1h-1zM616 203h1v1h-1zM226 213h1v1h-1zM236 213h1v1h-1zM246 213h1v1h-1zM256 213h1v1h-1zM266 213h1v1h-1zM276 213h1v1h-1zM286 213h1v1h-1zM296 213h1v1h-1zM306 213h1v1h-1zM316 213h1v1h-1zM326 213h1v1h-1zM336 213h1v1h-1zM346 213h1v1h-1zM356 213h1v1h-1zM366 213h1v1h-1zM376 213h1v1h-1zM386 213h1v1h-1zM396 213h1v1h-1zM406 213h1v1h-1zM416 213h1v1h-1zM426 213h1v1h-1zM436 213h1v1h-1zM446 213h1v1h-1zM456 213h1v1h-1zM466 213h1v1h-1zM476 213h1v1h-1zM486 213h1v1h-1zM496 213h1v1h-1zM506 213h1v1h-1zM516 213h1v1h-1zM526 213h1v1h-1zM536 213h1v1h-1zM546 213h1v1h-1zM556 213h1v1h-1zM566 213h1v1h-1zM576 213h1v1h-1zM586 213h1v1h-1zM596 213h1v1h-1zM606 213h1v1h-1zM616 213h1v1h-1zM226 223h1v1h-1zM236 223h1v1h-1zM246 223h1v1h-1zM256 223h1v1h-1zM266 223h1v1h-1zM276 223h1v1h-1zM286 223h1v1h-1zM296 223h1v1h-1zM306 223h1v1h-1zM316 223h1v1h-1zM326 223h1v1h-1zM336 223h1v1h-1zM346 223h1v1h-1zM356 223h1v1h-1zM366 223h1v1h-1zM376 223h1v1h-1zM386 223h1v1h-1zM396 223h1v1h-1zM406 223h1v1h-1zM416 223h1v1h-1zM426 223h1v1h-1zM436 223h1v1h-1zM446 223h1v1h-1zM456 223h1v1h-1zM466 223h1v1h-1zM476 223h1v1h-1zM486 223h1v1h-1zM496 223h1v1h-1zM506 223h1v1h-1zM516 223h1v1h-1zM526 223h1v1h-1zM536 223h1v1h-1zM546 223h1v1h-1zM556 223h1v1h-1zM566 223h1v1h-1zM576 223h1v1h-1zM586 223h1v1h-1zM596 223h1v1h-1zM606 223h1v1h-1zM616 223h1v1h-1zM226 233h1v1h-1zM236 233h1v1h-1zM246 233h1v1h-1zM256 233h1v1h-1zM266 233h1v1h-1zM276 233h1v1h-1zM286 233h1v1h-1zM296 233h1v1h-1zM306 233h1v1h-1zM316 233h1v1h-1zM326 233h1v1h-1zM336 233h1v1h-1zM346 233h1v1h-1zM356 233h1v1h-1zM366 233h1v1h-1zM376 233h1v1h-1zM386 233h1v1h-1zM396 233h1v1h-1zM406 233h1v1h-1zM416 233h1v1h-1zM426 233h1v1h-1zM436 233h1v1h-1zM446 233h1v1h-1zM456 233h1v1h-1zM466 233h1v1h-1zM476 233h1v1h-1zM486 233h1v1h-1zM496 233h1v1h-1zM506 233h1v1h-1zM516 233h1v1h-1zM526 233h1v1h-1zM536 233h1v1h-1zM546 233h1v1h-1zM556 233h1v1h-1zM566 233h1v1h-1zM576 233h1v1h-1zM586 233h1v1h-1zM596 233h1v1h-1zM606 233h1v1h-1zM616 233h1v1h-1zM226 243h1v1h-1zM236 243h1v1h-1zM246 243h1v1h-1zM256 243h1v1h-1zM266 243h1v1h-1zM276 243h1v1h-1zM286 243h1v1h-1zM296 243h1v1h-1zM306 243h1v1h-1zM316 243h1v1h-1zM326 243h1v1h-1zM336 243h1v1h-1zM346 243h1v1h-1zM356 243h1v1h-1zM366 243h1v1h-1zM376 243h1v1h-1zM386 243h1v1h-1zM396 243h1v1h-1zM406 243h1v1h-1zM416 243h1v1h-1zM426 243h1v1h-1zM436 243h1v1h-1zM446 243h1v1h-1zM456 243h1v1h-1zM466 243h1v1h-1zM476 243h1v1h-1zM486 243h1v1h-1zM496 243h1v1h-1zM506 243h1v1h-1zM516 243h1v1h-1zM526 243h1v1h-1zM536 243h1v1h-1zM546 243h1v1h-1zM556 243h1v1h-1zM566 243h1v1h-1zM576 243h1v1h-1zM586 243h1v1h-1zM596 243h1v1h-1zM606 243h1v1h-1zM616 243h1v1h-1zM226 253h1v1h-1zM236 253h1v1h-1zM246 253h1v1h-1zM256 253h1v1h-1zM266 253h1v1h-1zM276 253h1v1h-1zM286 253h1v1h-1zM296 253h1v1h-1zM306 253h1v1h-1zM316 253h1v1h-1zM326 253h1v1h-1zM336 253h1v1h-1zM346 253h1v1h-1zM356 253h1v1h-1zM366 253h1v1h-1zM376 253h1v1h-1zM386 253h1v1h-1zM396 253h1v1h-1zM406 253h1v1h-1zM416 253h1v1h-1zM426 253h1v1h-1zM436 253h1v1h-1zM446 253h1v1h-1zM456 253h1v1h-1zM466 253h1v1h-1zM476 253h1v1h-1zM486 253h1v1h-1zM496 253h1v1h-1zM506 253h1v1h-1zM516 253h1v1h-1zM526 253h1v1h-1zM536 253h1v1h-1zM546 253h1v1h-1zM556 253h1v1h-1zM566 253h1v1h-1zM576 253h1v1h-1zM586 253h1v1h-1zM596 253h1v1h-1zM606 253h1v1h-1zM616 253h1v1h-1zM226 263h1v1h-1zM236 263h1v1h-1zM246 263h1v1h-1zM256 263h1v1h-1zM266 263h1v1h-1zM276 263h1v1h-1zM286 263h1v1h-1zM296 263h1v1h-1zM306 263h1v1h-1zM316 263h1v1h-1zM326 263h1v1h-1zM336 263h1v1h-1zM346 263h1v1h-1zM356 263h1v1h-1zM366 263h1v1h-1zM376 263h1v1h-1zM386 263h1v1h-1zM396 263h1v1h-1zM406 263h1v1h-1zM416 263h1v1h-1zM426 263h1v1h-1zM436 263h1v1h-1zM446 263h1v1h-1zM456 263h1v1h-1zM466 263h1v1h-1zM476 263h1v1h-1zM486 263h1v1h-1zM496 263h1v1h-1zM506 263h1v1h-1zM516 263h1v1h-1zM526 263h1v1h-1zM536 263h1v1h-1zM546 263h1v1h-1zM556 263h1v1h-1zM566 263h1v1h-1zM576 263h1v1h-1zM586 263h1v1h-1zM596 263h1v1h-1zM606 263h1v1h-1zM616 263h1v1h-1zM226 273h1v1h-1zM236 273h1v1h-1zM246 273h1v1h-1zM256 273h1v1h-1zM266 273h1v1h-1zM276 273h1v1h-1zM286 273h1v1h-1zM296 273h1v1h-1zM306 273h1v1h-1zM316 273h1v1h-1zM326 273h1v1h-1zM336 273h1v1h-1zM346 273h1v1h-1zM356 273h1v1h-1zM366 273h1v1h-1zM376 273h1v1h-1zM386 273h1v1h-1zM396 273h1v1h-1zM406 273h1v1h-1zM416 273h1v1h-1zM426 273h1v1h-1zM436 273h1v1h-1zM446 273h1v1h-1zM456 273h1v1h-1zM466 273h1v1h-1zM476 273h1v1h-1zM486 273h1v1h-1zM496 273h1v1h-1zM506 273h1v1h-1zM516 273h1v1h-1zM526 273h1v1h-1zM536 273h1v1h-1zM546 273h1v1h-1zM556 273h1v1h-1zM566 273h1v1h-1zM576 273h1v1h-1zM586 273h1v1h-1zM596 273h1v1h-1zM606 273h1v1h-1zM616 273h1v1h-1zM226 283h1v1h-1zM236 283h1v1h-1zM246 283h1v1h-1zM256 283h1v1h-1zM266 283h1v1h-1zM276 283h1v1h-1zM286 283h1v1h-1zM296 283h1v1h-1zM306 283h1v1h-1zM316 283h1v1h-1zM326 283h1v1h-1zM336 283h1v1h-1zM346 283h1v1h-1zM356 283h1v1h-1zM366 283h1v1h-1zM376 283h1v1h-1zM386 283h1v1h-1zM396 283h1v1h-1zM406 283h1v1h-1zM416 283h1v1h-1zM426 283h1v1h-1zM436 283h1v1h-1zM446 283h1v1h-1zM456 283h1v1h-1zM466 283h1v1h-1zM476 283h1v1h-1zM486 283h1v1h-1zM496 283h1v1h-1zM506 283h1v1h-1zM516 283h1v1h-1zM526 283h1v1h-1zM536 283h1v1h-1zM546 283h1v1h-1zM556 283h1v1h-1zM566 283h1v1h-1zM576 283h1v1h-1zM586 283h1v1h-1zM596 283h1v1h-1zM606 283h1v1h-1zM616 283h1v1h-1zM226 293h1v1h-1zM236 293h1v1h-1zM246 293h1v1h-1zM256 293h1v1h-1zM266 293h1v1h-1zM276 293h1v1h-1zM286 293h1v1h-1zM296 293h1v1h-1zM306 293h1v1h-1zM316 293h1v1h-1zM326 293h1v1h-1zM336 293h1v1h-1zM346 293h1v1h-1zM356 293h1v1h-1zM366 293h1v1h-1zM376 293h1v1h-1zM386 293h1v1h-1zM396 293h1v1h-1zM406 293h1v1h-1zM416 293h1v1h-1zM426 293h1v1h-1zM436 293h1v1h-1zM446 293h1v1h-1zM456 293h1v1h-1zM466 293h1v1h-1zM476 293h1v1h-1zM486 293h1v1h-1zM496 293h1v1h-1zM506 293h1v1h-1zM516 293h1v1h-1zM526 293h1v1h-1zM536 293h1v1h-1zM546 293h1v1h-1zM556 293h1v1h-1zM566 293h1v1h-1zM576 293h1v1h-1zM586 293h1v1h-1zM596 293h1v1h-1zM606 293h1v1h-1zM616 293h1v1h-1zM226 303h1v1h-1zM236 303h1v1h-1zM246 303h1v1h-1zM256 303h1v1h-1zM266 303h1v1h-1zM276 303h1v1h-1zM286 303h1v1h-1zM296 303h1v1h-1zM306 303h1v1h-1zM316 303h1v1h-1zM326 303h1v1h-1zM336 303h1v1h-1zM346 303h1v1h-1zM356 303h1v1h-1zM366 303h1v1h-1zM376 303h1v1h-1zM386 303h1v1h-1zM396 303h1v1h-1zM406 303h1v1h-1zM416 303h1v1h-1zM426 303h1v1h-1zM436 303h1v1h-1zM446 303h1v1h-1zM456 303h1v1h-1zM466 303h1v1h-1zM476 303h1v1h-1zM486 303h1v1h-1zM496 303h1v1h-1zM506 303h1v1h-1zM516 303h1v1h-1zM526 303h1v1h-1zM536 303h1v1h-1zM546 303h1v1h-1zM556 303h1v1h-1zM566 303h1v1h-1zM576 303h1v1h-1zM586 303h1v1h-1zM596 303h1v1h-1zM606 303h1v1h-1zM616 303h1v1h-1zM226 313h1v1h-1zM236 313h1v1h-1zM246 313h1v1h-1zM256 313h1v1h-1zM266 313h1v1h-1zM276 313h1v1h-1zM286 313h1v1h-1zM296 313h1v1h-1zM306 313h1v1h-1zM316 313h1v1h-1zM326 313h1v1h-1zM336 313h1v1h-1zM346 313h1v1h-1zM356 313h1v1h-1zM366 313h1v1h-1zM376 313h1v1h-1zM386 313h1v1h-1zM396 313h1v1h-1zM406 313h1v1h-1zM416 313h1v1h-1zM426 313h1v1h-1zM436 313h1v1h-1zM446 313h1v1h-1zM456 313h1v1h-1zM466 313h1v1h-1zM476 313h1v1h-1zM486 313h1v1h-1zM496 313h1v1h-1zM506 313h1v1h-1zM516 313h1v1h-1zM526 313h1v1h-1zM536 313h1v1h-1zM546 313h1v1h-1zM556 313h1v1h-1zM566 313h1v1h-1zM576 313h1v1h-1zM586 313h1v1h-1zM596 313h1v1h-1zM606 313h1v1h-1zM616 313h1v1h-1zM226 323h1v1h-1zM236 323h1v1h-1zM246 323h1v1h-1zM256 323h1v1h-1zM266 323h1v1h-1zM276 323h1v1h-1zM286 323h1v1h-1zM296 323h1v1h-1zM306 323h1v1h-1zM316 323h1v1h-1zM326 323h1v1h-1zM336 323h1v1h-1zM346 323h1v1h-1zM356 323h1v1h-1zM366 323h1v1h-1zM376 323h1v1h-1zM386 323h1v1h-1zM396 323h1v1h-1zM406 323h1v1h-1zM416 323h1v1h-1zM426 323h1v1h-1zM436 323h1v1h-1zM446 323h1v1h-1zM456 323h1v1h-1zM466 323h1v1h-1zM476 323h1v1h-1zM486 323h1v1h-1zM496 323h1v1h-1zM506 323h1v1h-1zM516 323h1v1h-1zM526 323h1v1h-1zM536 323h1v1h-1zM546 323h1v1h-1zM556 323h1v1h-1zM566 323h1v1h-1zM576 323h1v1h-1zM586 323h1v1h-1zM596 323h1v1h-1zM606 323h1v1h-1zM616 323h1v1h-1zM226 333h1v1h-1zM236 333h1v1h-1zM246 333h1v1h-1zM256 333h1v1h-1zM266 333h1v1h-1zM276 333h1v1h-1zM286 333h1v1h-1zM296 333h1v1h-1zM306 333h1v1h-1zM316 333h1v1h-1zM326 333h1v1h-1zM336 333h1v1h-1zM346 333h1v1h-1zM356 333h1v1h-1zM366 333h1v1h-1zM376 333h1v1h-1zM386 333h1v1h-1zM396 333h1v1h-1zM406 333h1v1h-1zM416 333h1v1h-1zM426 333h1v1h-1zM436 333h1v1h-1zM446 333h1v1h-1zM456 333h1v1h-1zM466 333h1v1h-1zM476 333h1v1h-1zM486 333h1v1h-1zM496 333h1v1h-1zM506 333h1v1h-1zM516 333h1v1h-1zM526 333h1v1h-1zM536 333h1v1h-1zM546 333h1v1h-1zM556 333h1v1h-1zM566 333h1v1h-1zM576 333h1v1h-1zM586 333h1v1h-1zM596 333h1v1h-1zM606 333h1v1h-1zM616 333h1v1h-1zM226 343h1v1h-1zM236 343h1v1h-1zM246 343h1v1h-1zM256 343h1v1h-1zM266 343h1v1h-1zM276 343h1v1h-1zM286 343h1v1h-1zM296 343h1v1h-1zM306 343h1v1h-1zM316 343h1v1h-1zM326 343h1v1h-1zM336 343h1v1h-1zM346 343h1v1h-1zM356 343h1v1h-1zM366 343h1v1h-1zM376 343h1v1h-1zM386 343h1v1h-1zM396 343h1v1h-1zM406 343h1v1h-1zM416 343h1v1h-1zM426 343h1v1h-1zM436 343h1v1h-1zM446 343h1v1h-1zM456 343h1v1h-1zM466 343h1v1h-1zM476 343h1v1h-1zM486 343h1v1h-1zM496 343h1v1h-1zM506 343h1v1h-1zM516 343h1v1h-1zM526 343h1v1h-1zM536 343h1v1h-1zM546 343h1v1h-1zM556 343h1v1h-1zM566 343h1v1h-1zM576 343h1v1h-1zM586 343h1v1h-1zM596 343h1v1h-1zM606 343h1v1h-1zM616 343h1v1h-1zM226 353h1v1h-1zM236 353h1v1h-1zM246 353h1v1h-1zM256 353h1v1h-1zM266 353h1v1h-1zM276 353h1v1h-1zM286 353h1v1h-1zM296 353h1v1h-1zM306 353h1v1h-1zM316 353h1v1h-1zM326 353h1v1h-1zM336 353h1v1h-1zM346 353h1v1h-1zM356 353h1v1h-1zM366 353h1v1h-1zM376 353h1v1h-1zM386 353h1v1h-1zM396 353h1v1h-1zM406 353h1v1h-1zM416 353h1v1h-1zM426 353h1v1h-1zM436 353h1v1h-1zM446 353h1v1h-1zM456 353h1v1h-1zM466 353h1v1h-1zM476 353h1v1h-1zM486 353h1v1h-1zM496 353h1v1h-1zM506 353h1v1h-1zM516 353h1v1h-1zM526 353h1v1h-1zM536 353h1v1h-1zM546 353h1v1h-1zM556 353h1v1h-1zM566 353h1v1h-1zM576 353h1v1h-1zM586 353h1v1h-1zM596 353h1v1h-1zM606 353h1v1h-1zM616 353h1v1h-1zM226 363h1v1h-1zM236 363h1v1h-1zM246 363h1v1h-1zM256 363h1v1h-1zM266 363h1v1h-1zM276 363h1v1h-1zM286 363h1v1h-1zM296 363h1v1h-1zM306 363h1v1h-1zM316 363h1v1h-1zM326 363h1v1h-1zM336 363h1v1h-1zM346 363h1v1h-1zM356 363h1v1h-1zM366 363h1v1h-1zM376 363h1v1h-1zM386 363h1v1h-1zM396 363h1v1h-1zM406 363h1v1h-1zM416 363h1v1h-1zM426 363h1v1h-1zM436 363h1v1h-1zM446 363h1v1h-1zM456 363h1v1h-1zM466 363h1v1h-1zM476 363h1v1h-1zM486 363h1v1h-1zM496 363h1v1h-1zM506 363h1v1h-1zM516 363h1v1h-1zM526 363h1v1h-1zM536 363h1v1h-1zM546 363h1v1h-1zM556 363h1v1h-1zM566 363h1v1h-1zM576 363h1v1h-1zM586 363h1v1h-1zM596 363h1v1h-1zM606 363h1v1h-1zM616 363h1v1h-1zM226 373h1v1h-1zM236 373h1v1h-1zM246 373h1v1h-1zM256 373h1v1h-1zM266 373h1v1h-1zM276 373h1v1h-1zM286 373h1v1h-1zM296 373h1v1h-1zM306 373h1v1h-1zM316 373h1v1h-1zM326 373h1v1h-1zM336 373h1v1h-1zM346 373h1v1h-1zM356 373h1v1h-1zM366 373h1v1h-1zM376 373h1v1h-1zM386 373h1v1h-1zM396 373h1v1h-1zM406 373h1v1h-1zM416 373h1v1h-1zM426 373h1v1h-1zM436 373h1v1h-1zM446 373h1v1h-1zM456 373h1v1h-1zM466 373h1v1h-1zM476 373h1v1h-1zM486 373h1v1h-1zM496 373h1v1h-1zM506 373h1v1h-1zM516 373h1v1h-1zM526 373h1v1h-1zM536 373h1v1h-1zM546 373h1v1h-1zM556 373h1v1h-1zM566 373h1v1h-1zM576 373h1v1h-1zM586 373h1v1h-1zM596 373h1v1h-1zM606 373h1v1h-1zM616 373h1v1h-1z"/></svg>
<div class="a" style="left:222px;top:59px;width:408px;height:24px;border-radius:6px 6px 0 0;background:#1c4f7c"></div>
<div class="a" style="left:223px;top:60px;width:406px;height:22px;border-radius:5px 5px 0 0;background:linear-gradient(#43aef2 0px,#3899dc 1px,#3391d5 11px,#2e83c3 12px,#2d80c0 22px)"></div>
<svg style="left:228px;top:65px" width="16" height="12" viewBox="0 0 16 12"><path d="M3 0H16V9L13 12H0V3Z" fill="#3cc24a"/><path d="M0 12L16 3V9L13 12Z" fill="#2aa83a" opacity="0.6"/><text x="7.5" y="8.8" font-size="8.5" font-weight="bold" font-family="Liberation Sans" fill="#fff" text-anchor="middle" letter-spacing="0">D</text></svg>
<div class="t" style="left:368px;top:64px;letter-spacing:0.605px;color:#fff;text-shadow:1px 1px 0 #123">Form - untitled*</div>
<div class="a" style="left:586px;top:62px;width:18px;height:18px;border:1px solid #1c4a72;border-radius:3px;background:linear-gradient(#3595d8,#2f84c5)"></div>
<div class="a" style="left:607px;top:62px;width:17px;height:18px;border:1px solid #1c4a72;border-radius:3px;background:linear-gradient(#3595d8,#2f84c5)"></div>
<div class="a" style="left:593px;top:71px;width:4px;height:2px;background:#fff"></div>
<svg style="left:611px;top:66px" width="10" height="10"><path d="M1.5 1.5L8.5 8.5M8.5 1.5L1.5 8.5" stroke="#fff" stroke-width="2.4"/></svg>
<svg style="left:0;top:0" width="1143" height="651"><rect x="381.5" y="132" width="1" height="201" fill="#008000" opacity="0.7"/><rect x="315" y="198.5" width="201" height="1" fill="#008000" opacity="0.7"/><rect x="448.5" y="132" width="1" height="201" fill="#008000" opacity="0.7"/><rect x="315" y="265.5" width="201" height="1" fill="#008000" opacity="0.7"/><path d="M388.5 138.5L441.5 191.5M441.5 138.5L388.5 191.5" stroke="#000080" stroke-width="2" fill="none"/><path d="M321.5 205.5L374.5 258.5M374.5 205.5L321.5 258.5" stroke="#000080" stroke-width="2" fill="none"/><circle cx="415.5" cy="232.5" r="26.3" stroke="#000080" stroke-width="2" fill="none"/><rect x="313.5" y="130.5" width="5" height="5" fill="#000" stroke="#00f"/><rect x="313.5" y="230.5" width="5" height="5" fill="#000" stroke="#00f"/><rect x="313.5" y="330.5" width="5" height="5" fill="#000" stroke="#00f"/><rect x="413.5" y="130.5" width="5" height="5" fill="#000" stroke="#00f"/><rect x="513.5" y="130.5" width="5" height="5" fill="#000" stroke="#00f"/><rect x="513.5" y="230.5" width="5" height="5" fill="#000" stroke="#00f"/></svg>
<div class="a" style="left:398px;top:288px;width:231px;height:344px;background:#fff;border:1px solid #a9a9a9"></div>
<div class="t" style="left:426px;top:292px;letter-spacing:0.471px;">Edit State...</div>
<div class="a" style="left:403px;top:310px;width:221px;height:1px;background:#c6c6c6"></div>
<div class="t" style="left:426px;top:316px;letter-spacing:0.487px;">Change objectName...</div>
<div class="a" style="left:403px;top:334px;width:221px;height:1px;background:#c6c6c6"></div>
<div class="t" style="left:426px;top:340px;letter-spacing:0.444px;">Change toolTip...</div>
<div class="t" style="left:426px;top:362px;letter-spacing:0.418px;">Change whatsThis...</div>
<div class="t" style="left:426px;top:384px;letter-spacing:0.456px;">Change styleSheet...</div>
<div class="a" style="left:403px;top:402px;width:221px;height:1px;background:#c6c6c6"></div>
<div class="t" style="left:426px;top:408px;letter-spacing:0.394px;">Size Constraints</div>
<svg style="left:619px;top:411px" width="5" height="8"><path d="M0 0L4 4L0 8Z" fill="#666"/></svg>
<div class="a" style="left:403px;top:426px;width:221px;height:1px;background:#c6c6c6"></div>
<div class="t" style="left:426px;top:432px;letter-spacing:0.518px;">Promoted widgets...</div>
<div class="a" style="left:403px;top:450px;width:221px;height:1px;background:#c6c6c6"></div>
<div class="t" style="left:426px;top:456px;letter-spacing:0.428px;">Send to <span class="u">B</span>ack</div>
<div class="t" style="left:574px;top:456px;letter-spacing:0.841px;">Ctrl+K</div>
<div class="t" style="left:426px;top:478px;letter-spacing:0.465px;">Bring to <span class="u">F</span>ront</div>
<div class="t" style="left:574px;top:478px;letter-spacing:0.881px;">Ctrl+L</div>
<div class="a" style="left:403px;top:496px;width:221px;height:1px;background:#c6c6c6"></div>
<div class="t" style="left:426px;top:502px;letter-spacing:0.617px;">Cu<span class="u">t</span></div>
<div class="t" style="left:574px;top:502px;letter-spacing:0.909px;">Ctrl+X</div>
<div class="t" style="left:426px;top:524px;letter-spacing:0.422px;"><span class="u">C</span>opy</div>
<div class="t" style="left:574px;top:524px;letter-spacing:0.803px;">Ctrl+C</div>
<div class="t" style="left:426px;top:546px;letter-spacing:0.109px;"><span class="u">P</span>aste</div>
<div class="t" style="left:574px;top:546px;letter-spacing:0.906px;">Ctrl+V</div>
<div class="t" style="left:426px;top:568px;letter-spacing:0.474px;">Select <span class="u">A</span>ll</div>
<div class="t" style="left:574px;top:568px;letter-spacing:0.906px;">Ctrl+A</div>
<div class="t" style="left:426px;top:590px;letter-spacing:0.659px;"><span class="u">D</span>elete</div>
<div class="a" style="left:403px;top:608px;width:221px;height:1px;background:#c6c6c6"></div>
<div class="t" style="left:426px;top:614px;letter-spacing:0.604px;">Lay out</div>
<svg style="left:619px;top:617px" width="5" height="8"><path d="M0 0L4 4L0 8Z" fill="#666"/></svg>
<div class="t" style="left:677px;top:61px;letter-spacing:0.527px;">Object Inspector</div>
<svg style="left:1116px;top:62px" width="11" height="11" viewBox="0 0 11 11"><rect x="0.5" y="0.5" width="10" height="10" rx="2" fill="none" stroke="#6c6c6c"/><rect x="4.5" y="2.5" width="4" height="4" rx="0.5" fill="none" stroke="#6c6c6c"/><rect x="2.5" y="4.5" width="4" height="4" rx="0.5" fill="#efefef" stroke="#6c6c6c"/></svg>
<svg style="left:1130px;top:62px" width="11" height="11" viewBox="0 0 11 11"><rect x="0.5" y="0.5" width="10" height="10" rx="2" fill="none" stroke="#6c6c6c"/><path d="M3 3L8 8M8 3L3 8" stroke="#555" stroke-width="1.8"/></svg>
<div class="filter" style="left:673px;top:78px;width:470px;height:21px"></div>
<div class="ph" style="left:675px;top:81px">Filter</div>
<div class="a" style="left:673px;top:105px;width:470px;height:108px;background:#fff;border:1px solid #b4b4b4"></div>
<div class="a" style="left:674px;top:106px;width:454px;height:17px;background:linear-gradient(#fbfbfb,#ececec)"></div>
<div class="a" style="left:674px;top:123px;width:454px;height:1px;background:#c0c0c0"></div>
<div class="a" style="left:752px;top:106px;width:1px;height:17px;background:#cfcfcf"></div>
<div class="t" style="left:676px;top:108px;letter-spacing:0.594px;">Object</div>
<div class="t" style="left:755px;top:108px;letter-spacing:0.074px;">Class</div>
<svg style="left:680px;top:131px" width="9" height="5"><path d="M0 0H8L4 4Z" fill="#555"/></svg>
<div class="t" style="left:719px;top:126px;letter-spacing:0.365px;">Form</div>
<div class="t" style="left:756px;top:126px;letter-spacing:0.516px;">QWidget</div>
<div class="a" style="left:674px;top:142px;width:454px;height:14px;background:#308cc6"></div>
<div class="t" style="left:717px;top:142px;letter-spacing:0.586px;color:#fff">t…e</div>
<div class="t" style="left:756px;top:142px;letter-spacing:0.049px;color:#fff">TicTacToe</div>
<div class="a" style="left:1128px;top:106px;width:1px;height:106px;background:#b4b4b4"></div>
<div class="a" style="left:1129px;top:106px;width:13px;height:13px;background:linear-gradient(#fff,#f3f3f3)"></div>
<div class="a" style="left:1129px;top:119px;width:13px;height:1px;background:#b4b4b4"></div>
<div class="a" style="left:1129px;top:198px;width:13px;height:1px;background:#b4b4b4"></div>
<div class="a" style="left:1129px;top:199px;width:13px;height:13px;background:linear-gradient(#fff,#f3f3f3)"></div>
<div class="a" style="left:1129px;top:120px;width:13px;height:77px;background:linear-gradient(90deg,#fafafa,#f0f0f0)"></div>
<svg style="left:1131px;top:110px" width="9" height="5"><path d="M0 4H8L4 0Z" fill="#444"/></svg>
<svg style="left:1131px;top:203px" width="9" height="5"><path d="M0 0H8L4 4Z" fill="#444"/></svg>
<div class="a" style="left:901px;top:215px;width:1px;height:1px;background:#a8a8a8"></div>
<div class="a" style="left:904px;top:215px;width:1px;height:1px;background:#a8a8a8"></div>
<div class="a" style="left:907px;top:215px;width:1px;height:1px;background:#a8a8a8"></div>
<div class="a" style="left:910px;top:215px;width:1px;height:1px;background:#a8a8a8"></div>
<div class="a" style="left:913px;top:215px;width:1px;height:1px;background:#a8a8a8"></div>
<div class="a" style="left:916px;top:215px;width:1px;height:1px;background:#a8a8a8"></div>
<div class="t" style="left:677px;top:222px;letter-spacing:0.484px;">Property Editor</div>
<svg style="left:1116px;top:223px" width="11" height="11" viewBox="0 0 11 11"><rect x="0.5" y="0.5" width="10" height="10" rx="2" fill="none" stroke="#6c6c6c"/><rect x="4.5" y="2.5" width="4" height="4" rx="0.5" fill="none" stroke="#6c6c6c"/><rect x="2.5" y="4.5" width="4" height="4" rx="0.5" fill="#efefef" stroke="#6c6c6c"/></svg>
<svg style="left:1130px;top:223px" width="11" height="11" viewBox="0 0 11 11"><rect x="0.5" y="0.5" width="10" height="10" rx="2" fill="none" stroke="#6c6c6c"/><path d="M3 3L8 8M8 3L3 8" stroke="#555" stroke-width="1.8"/></svg>
<div class="filter" style="left:677px;top:247px;width:363px;height:21px"></div>
<div class="ph" style="left:679px;top:250px">Filter</div>
<div class="a" style="left:673px;top:277px;width:470px;height:18px;background:#efefef;border:1px solid #c4c4c4"></div>
<div class="t" style="left:676px;top:279px;letter-spacing:0.186px;">ticTacToe : TicTacToe</div>
<div class="a" style="left:673px;top:296px;width:470px;height:133px;background:#fff;border:1px solid #b4b4b4"></div>
<div class="a" style="left:674px;top:297px;width:454px;height:17px;background:linear-gradient(#fbfbfb,#ececec)"></div>
<div class="a" style="left:674px;top:314px;width:454px;height:1px;background:#c0c0c0"></div>
<div class="a" style="left:823px;top:297px;width:1px;height:17px;background:#cfcfcf"></div>
<div class="t" style="left:676px;top:299px;letter-spacing:0.511px;">Property</div>
<div class="t" style="left:826px;top:299px;letter-spacing:0.473px;">Value</div>
<div class="a" style="left:674px;top:315px;width:454px;height:17px;background:#fefee0"></div>
<div class="a" style="left:674px;top:332px;width:454px;height:1px;background:#c6c6c6"></div>
<div class="a" style="left:823px;top:315px;width:1px;height:17px;background:#c6c6c6"></div>
<div class="a" style="left:674px;top:333px;width:454px;height:17px;background:#fffcbf"></div>
<div class="a" style="left:674px;top:350px;width:454px;height:1px;background:#c6c6c6"></div>
<div class="a" style="left:823px;top:333px;width:1px;height:17px;background:#c6c6c6"></div>
<div class="a" style="left:674px;top:351px;width:454px;height:19px;background:#fefee0"></div>
<div class="a" style="left:674px;top:370px;width:454px;height:1px;background:#c6c6c6"></div>
<div class="a" style="left:823px;top:351px;width:1px;height:19px;background:#c6c6c6"></div>
<div class="a" style="left:674px;top:371px;width:454px;height:21px;background:#fffcbf"></div>
<div class="a" style="left:674px;top:392px;width:454px;height:1px;background:#c6c6c6"></div>
<div class="a" style="left:823px;top:371px;width:1px;height:21px;background:#c6c6c6"></div>
<div class="a" style="left:674px;top:393px;width:454px;height:17px;background:#fefee0"></div>
<div class="a" style="left:674px;top:410px;width:454px;height:1px;background:#c6c6c6"></div>
<div class="a" style="left:823px;top:393px;width:1px;height:17px;background:#c6c6c6"></div>
<div class="a" style="left:674px;top:411px;width:454px;height:17px;background:#fffcbf"></div>
<div class="a" style="left:674px;top:428px;width:454px;height:1px;background:#c6c6c6"></div>
<div class="a" style="left:823px;top:411px;width:1px;height:17px;background:#c6c6c6"></div>
<svg style="left:682px;top:320px" width="5" height="8"><path d="M0 0L4 4L0 8Z" fill="#555"/></svg>
<svg style="left:682px;top:356px" width="5" height="8"><path d="M0 0L4 4L0 8Z" fill="#555"/></svg>
<div class="t" style="left:697px;top:317px;letter-spacing:0.261px;">baseSize</div>
<div class="t" style="left:827px;top:317px;letter-spacing:0.73px;">0 x 0</div>
<div class="t" style="left:697px;top:335px;letter-spacing:0.828px;">palette</div>
<div class="t" style="left:827px;top:335px;letter-spacing:0.688px;">Inherited</div>
<div class="t" style="left:697px;top:354px;letter-spacing:1.01px;">font</div>
<div class="t" style="left:850px;top:354px;letter-spacing:0.45px;">[Sans Serif, 9]</div>
<div class="t" style="left:828px;top:352px;font-size:18px;line-height:18px;letter-spacing:0;-webkit-text-stroke:0">A</div>
<div class="t" style="left:697px;top:375px;letter-spacing:0.591px;">cursor</div>
<div class="t" style="left:851px;top:375px;letter-spacing:0.531px;">Arrow</div>
<svg style="left:832px;top:375px" width="10" height="15" viewBox="0 0 10 15"><path d="M0.5 0.5V12L3.3 9.5L5.5 14L7.5 13L5.4 8.7H9Z" fill="#fff" stroke="#333" stroke-width="1"/></svg>
<div class="t" style="left:697px;top:395px;letter-spacing:0.439px;">mouseTracking</div>
<div class="t" style="left:697px;top:413px;letter-spacing:0.541px;">tabletTracking</div>
<div class="a" style="left:827px;top:395px;width:14px;height:14px;background:#fff;border:1px solid #aaa;border-radius:1px"></div>
<div class="a" style="left:827px;top:413px;width:14px;height:14px;background:#fff;border:1px solid #aaa;border-radius:1px"></div>
<div class="a" style="left:1128px;top:297px;width:1px;height:132px;background:#b4b4b4"></div>
<div class="a" style="left:1129px;top:297px;width:13px;height:13px;background:linear-gradient(#fff,#f3f3f3)"></div>
<div class="a" style="left:1129px;top:310px;width:13px;height:1px;background:#b4b4b4"></div>
<div class="a" style="left:1129px;top:415px;width:13px;height:1px;background:#b4b4b4"></div>
<div class="a" style="left:1129px;top:416px;width:13px;height:13px;background:linear-gradient(#fff,#f3f3f3)"></div>
<div class="a" style="left:1129px;top:311px;width:13px;height:103px;background:linear-gradient(90deg,#fafafa,#f0f0f0)"></div>
<div class="a" style="left:1129px;top:311px;width:13px;height:103px;background:#e2e2e2"></div>
<div class="a" style="left:1129px;top:338px;width:13px;height:28px;background:linear-gradient(90deg,#fcfcfc,#f0f0f0);border-top:1px solid #b4b4b4;border-bottom:1px solid #b4b4b4"></div>
<svg style="left:1131px;top:301px" width="9" height="5"><path d="M0 4H8L4 0Z" fill="#444"/></svg>
<svg style="left:1131px;top:420px" width="9" height="5"><path d="M0 0H8L4 4Z" fill="#444"/></svg>
<div class="a" style="left:900px;top:431px;width:1px;height:1px;background:#a8a8a8"></div>
<div class="a" style="left:903px;top:431px;width:1px;height:1px;background:#a8a8a8"></div>
<div class="a" style="left:906px;top:431px;width:1px;height:1px;background:#a8a8a8"></div>
<div class="a" style="left:909px;top:431px;width:1px;height:1px;background:#a8a8a8"></div>
<div class="a" style="left:912px;top:431px;width:1px;height:1px;background:#a8a8a8"></div>
<div class="a" style="left:915px;top:431px;width:1px;height:1px;background:#a8a8a8"></div>
<svg style="left:1046px;top:246px" width="26" height="24" viewBox="0 0 26 24"><path d="M8 1H13V8H21V13H13V21H8V13H1V8H8Z" fill="#2ed02e" stroke="#169a16" stroke-width="1"/><path d="M9 2H12V9H20V10H12V9H9V10H2V9H9Z" fill="#9af59a"/><path d="M20 20H25L22.5 22.5Z" fill="#444"/></svg>
<svg style="left:1079px;top:253px" width="23" height="8" viewBox="0 0 23 8"><rect x="0.5" y="0.5" width="21" height="5" rx="1" fill="#d4d4d4" stroke="#9a9a9a"/></svg>
<svg style="left:1106px;top:242px" width="34" height="30" viewBox="0 0 34 30"><path d="M7.5 25.5L20 12.5" stroke="#8a8a8a" stroke-width="4" stroke-linecap="round"/><path d="M8 25L19.5 13" stroke="#333" stroke-width="1.6" stroke-linecap="round"/><path d="M7.5 26.5L9.5 24.5" stroke="#eee" stroke-width="1.5"/><circle cx="23.5" cy="8.5" r="4.8" fill="#d8d8d8" stroke="#9a9a9a" stroke-width="0.8"/><path d="M24.5 3L29.5 5.5L25.5 9Z" fill="#efefef"/><circle cx="21.5" cy="10.5" r="1.3" fill="#222"/><path d="M25 24H31L28 27Z" fill="#444"/></svg>
<div class="t" style="left:677px;top:438px;letter-spacing:0.314px;">Resource Browser</div>
<svg style="left:1116px;top:439px" width="11" height="11" viewBox="0 0 11 11"><rect x="0.5" y="0.5" width="10" height="10" rx="2" fill="none" stroke="#6c6c6c"/><rect x="4.5" y="2.5" width="4" height="4" rx="0.5" fill="none" stroke="#6c6c6c"/><rect x="2.5" y="4.5" width="4" height="4" rx="0.5" fill="#efefef" stroke="#6c6c6c"/></svg>
<svg style="left:1130px;top:439px" width="11" height="11" viewBox="0 0 11 11"><rect x="0.5" y="0.5" width="10" height="10" rx="2" fill="none" stroke="#6c6c6c"/><path d="M3 3L8 8M8 3L3 8" stroke="#555" stroke-width="1.8"/></svg>
<svg style="left:0;top:0" width="1143" height="651"><path d="M682 482.5L684.5 476L698.5 462L702.5 466L688.5 480Z" fill="#f2b632" stroke="#c08a20" stroke-width="0.7"/><path d="M684.5 476L698.5 462L700 463.5L686 477.5Z" fill="#f8d060"/><path d="M698 462.5L700.5 460L704.5 464L702 466.5Z" fill="#d8682a"/><path d="M697 463.5L698.5 462L702.5 466L701 467.5Z" fill="#c8c8c8"/><path d="M682 482.5L684.5 476L688.5 480Z" fill="#f0dca0"/><path d="M681.5 483.5L682.5 480.5L684 482Z" fill="#555"/><path d="M728.66 469.13A6.8 6.8 0 1 0 728.66 474.87" fill="none" stroke="#1a9a1a" stroke-width="4.6"/><path d="M728.66 469.13A6.8 6.8 0 0 0 715.70 472.00" fill="none" stroke="#4ab04a" stroke-width="2" opacity="0.6"/><path d="M724 472.3L733 472.3L733 463Z" fill="#1aa01a"/></svg>
<div class="filter" style="left:939px;top:461px;width:200px;height:22px"></div>
<div class="ph" style="left:942px;top:465px">Filter</div>
<div class="a" style="left:673px;top:491px;width:233px;height:115px;background:#fff;border:1px solid #b4b4b4"></div>
<div class="a" style="left:910px;top:491px;width:233px;height:115px;background:#fff;border:1px solid #b4b4b4"></div>
<div class="t" style="left:698px;top:492px;letter-spacing:0.836px;">&lt;resource root&gt;</div>
<div class="a" style="left:908px;top:542px;width:1px;height:1px;background:#b0b0b0"></div>
<div class="a" style="left:908px;top:545px;width:1px;height:1px;background:#b0b0b0"></div>
<div class="a" style="left:908px;top:548px;width:1px;height:1px;background:#b0b0b0"></div>
<div class="a" style="left:908px;top:551px;width:1px;height:1px;background:#b0b0b0"></div>
<div class="a" style="left:908px;top:554px;width:1px;height:1px;background:#b0b0b0"></div>
<div class="a" style="left:908px;top:557px;width:1px;height:1px;background:#b0b0b0"></div>
<div class="a" style="left:1034px;top:607px;width:109px;height:1px;background:#b4b4b4"></div>
<div class="a" style="left:673px;top:607px;width:129px;height:22px;background:linear-gradient(#e2e2e2,#dadada);border:1px solid #b4b4b4;border-radius:0 0 3px 3px"></div>
<div class="a" style="left:801px;top:607px;width:102px;height:22px;background:linear-gradient(#e2e2e2,#dadada);border:1px solid #b4b4b4;border-radius:0 0 3px 3px"></div>
<div class="a" style="left:903px;top:606px;width:131px;height:25px;background:linear-gradient(#f6f6f6,#f0f0f0);border:1px solid #b4b4b4;border-top:none;border-radius:0 0 3px 3px"></div>
<div class="t" style="left:686px;top:611px;letter-spacing:0.432px;">Signal/Slot Editor</div>
<div class="t" style="left:813px;top:611px;letter-spacing:0.503px;">Action Editor</div>
<div class="t" style="left:914px;top:612px;letter-spacing:0.314px;">Resource Browser</div>
<svg style="left:0;top:0" width="1143" height="651"><rect x="405.5" y="455.5" width="11" height="11" fill="#d2e2fb" stroke="#8aa0c4"/><rect x="409.5" y="459.5" width="11" height="11" fill="url(#gGrey)" stroke="#5a5a5a"/><rect x="409.5" y="481.5" width="11" height="11" fill="#e2e2e2" stroke="#a4a4a4"/><rect x="405.5" y="477.5" width="11" height="11" fill="url(#gBlue)" stroke="#4a6ca0"/><path d="M413 509.5L420.5 505" stroke="#8a8a70" stroke-width="2.4" stroke-linecap="round"/><path d="M413 509.5L420.5 505" stroke="#e8e8d8" stroke-width="1" stroke-linecap="round"/><path d="M412.5 509L420.5 514.5" stroke="#8a8a70" stroke-width="2.4" stroke-linecap="round"/><path d="M412.5 509L420.5 514.5" stroke="#e8e8d8" stroke-width="1" stroke-linecap="round"/><ellipse cx="410.9" cy="504.2" rx="2.2" ry="2.8" fill="none" stroke="#e8b010" stroke-width="1.8"/><path d="M411.8 506.8L413 509" stroke="#e8b010" stroke-width="1.6"/><ellipse cx="408.4" cy="512.2" rx="3.2" ry="2.3" fill="none" stroke="#e8b010" stroke-width="1.8"/><path d="M411 511L413 509.6" stroke="#e8b010" stroke-width="1.6"/><circle cx="413" cy="509.5" r="0.8" fill="#555"/><path d="M412.5 524.5L418 523.5L420.5 526V535.5L414 537Z" fill="#f0e0a0" stroke="#c8a860" stroke-width="0.8"/><path d="M405.5 525.5L411 524L413.5 526.5V536.5L406 538.5Z" fill="url(#gDoc)" stroke="#c8a060" stroke-width="0.9"/><rect x="406.5" y="546.5" width="9" height="13" rx="1" fill="#e8b830" stroke="#a07818" stroke-width="0.9"/><rect x="408.5" y="545.5" width="5" height="2.5" fill="#555"/><path d="M412.5 549.5L418 549L420.5 551V559.5L413 561Z" fill="url(#gDoc)" stroke="#c8a060" stroke-width="0.8"/><path d="M406 556H410V553.5L413.5 556.5L410 559.5V557.5H406Z" fill="#1a7ae8"/><rect x="697.5" y="125.5" width="6" height="3.5" fill="#a8d8f8" stroke="#4a6a90" stroke-width="0.9"/><rect x="704.5" y="125.5" width="6" height="3.5" fill="#a8d8f8" stroke="#4a6a90" stroke-width="0.9"/><rect x="697.5" y="130.5" width="6" height="3.5" fill="#a8d8f8" stroke="#4a6a90" stroke-width="0.9"/><rect x="697.5" y="135.5" width="6" height="3.5" fill="#d8f0ff" stroke="#4a6a90" stroke-width="0.9"/><circle cx="707.5" cy="135.2" r="4.8" fill="#d02020" stroke="#a01010" stroke-width="0.8"/><path d="M705 138L710 132.5" stroke="#c8c8c8" stroke-width="1.8"/></svg>
</body></html>
